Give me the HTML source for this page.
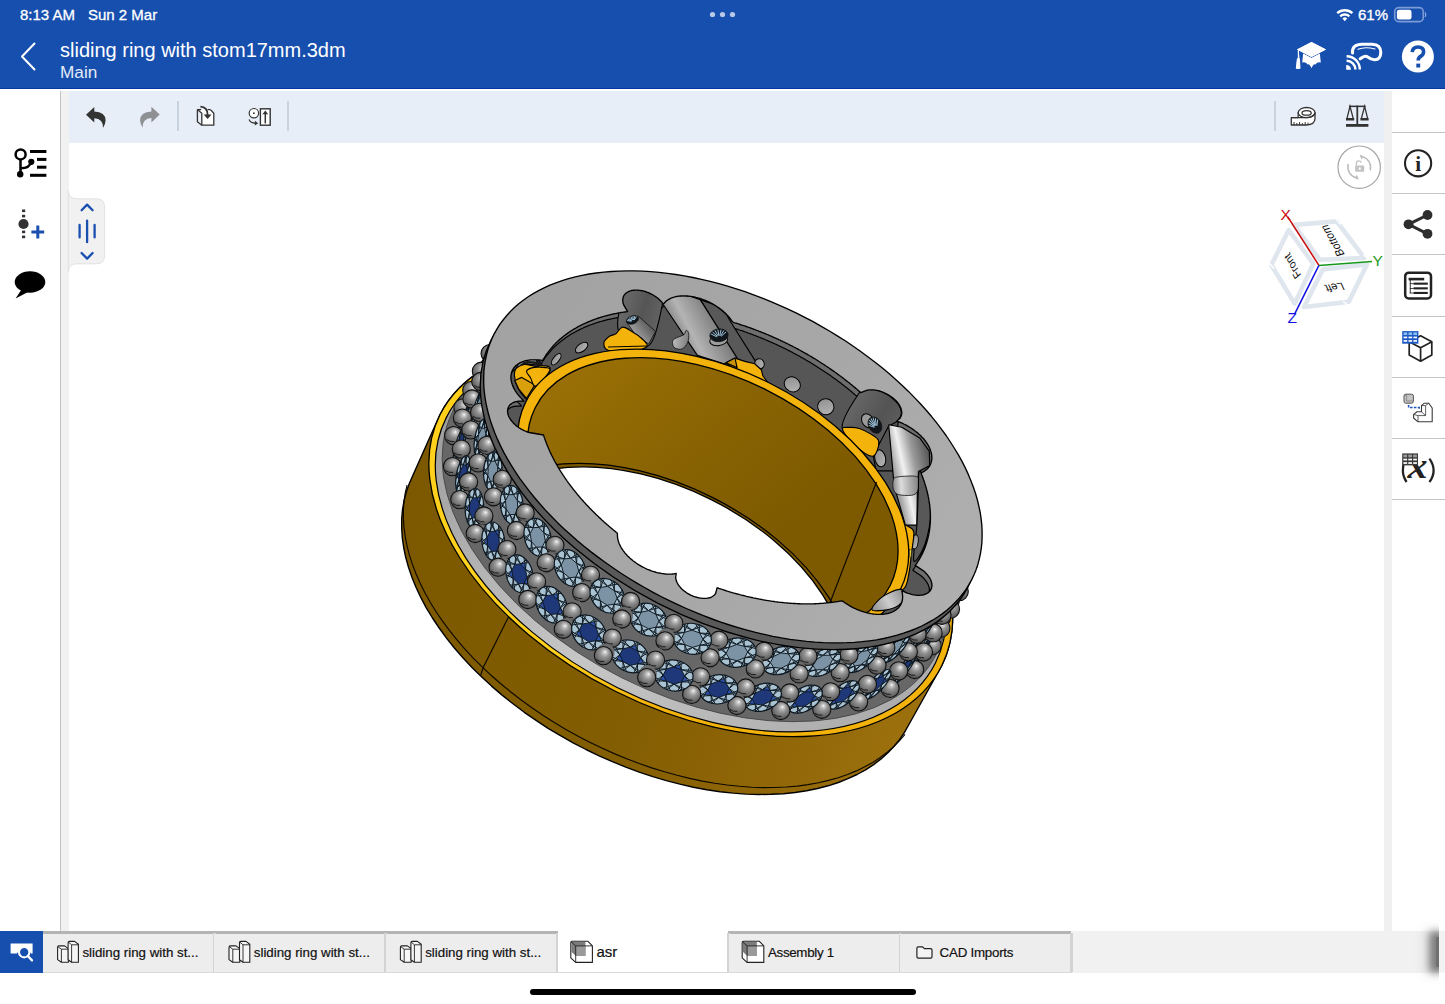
<!DOCTYPE html>
<html lang="en">
<head>
<meta charset="utf-8">
<title>sliding ring with stom17mm.3dm</title>
<style>
*{box-sizing:border-box;margin:0;padding:0}
html,body{width:1445px;height:1004px;overflow:hidden;background:#fff}
body{position:relative;font-family:"Liberation Sans",sans-serif;color:#1a1a1a}
.abs{position:absolute}
#hdr{left:0;top:0;width:1445px;height:89.3px;background:#174fae;color:#fff;border-bottom:1.6px solid #0736a2}
#hdr .st{position:absolute;top:6px;font-size:15px;line-height:17px;-webkit-text-stroke:.3px #fff;white-space:nowrap}
#title{position:absolute;left:60px;top:39px;font-size:20px;line-height:22px;white-space:nowrap}
#sub{position:absolute;left:60px;top:63px;font-size:17.2px;line-height:19px;color:#e4ebf7;white-space:nowrap}
#tb{left:68.5px;top:91px;width:1315.5px;height:51.8px;background:#e8eef8}
#lstrip{left:60px;top:91px;width:8.5px;height:840px;background:#f1f1f1;border-left:1.2px solid #c4c4c4}
#rstrip{left:1384px;top:91px;width:8px;height:840px;background:#f0f0f0}
.sep{position:absolute;width:2px;background:#c9d3e0;top:101px;height:30px}
.rline{position:absolute;left:1392px;width:53px;height:1px;background:#c4c4c4}
#tabs{left:0;top:930.6px;width:1445px;height:42.4px;background:#f1f1f1}
.tl{white-space:nowrap;color:#111;line-height:18px;-webkit-text-stroke:.2px #111}
#home{left:530px;top:988.6px;width:385.6px;height:6px;border-radius:3px;background:#000}
svg{position:absolute;overflow:visible}
</style>
</head>
<body>
<!-- header -->
<div id="hdr" class="abs">
  <div class="st" style="left:20px">8:13 AM</div>
  <div class="st" style="left:88px">Sun 2 Mar</div>
  <div class="st" style="left:1358px">61%</div>
  <div id="title">sliding ring with stom17mm.3dm</div>
  <div id="sub">Main</div>
</div>
<svg class="abs" style="left:0;top:0" width="1445" height="90" viewBox="0 0 1445 90">
  <!-- back chevron -->
  <path d="M34.5 43.5 L22 56.5 L34.5 69.5" fill="none" stroke="#fff" stroke-width="2" stroke-linecap="round" stroke-linejoin="round"/>
  <!-- three dots -->
  <circle cx="712.5" cy="14.5" r="2.6" fill="#b9c9e6"/><circle cx="722.5" cy="14.5" r="2.6" fill="#b9c9e6"/><circle cx="732.5" cy="14.5" r="2.6" fill="#b9c9e6"/>
  <!-- wifi -->
  <g fill="none" stroke="#fff" stroke-linecap="butt">
    <path d="M1337.2 13.2 A11.2 11.2 0 0 1 1352.4 13.2" stroke-width="2.3"/>
    <path d="M1340.2 16.3 A6.8 6.8 0 0 1 1349.4 16.3" stroke-width="2.3"/>
  </g>
  <path d="M1342.4 18.5 A3.4 3.4 0 0 1 1347.2 18.5 L1344.8 21.2 Z" fill="#fff"/>
  <!-- battery -->
  <rect x="1394.7" y="7.6" width="28.6" height="14" rx="4.2" fill="none" stroke="#7d9bd6" stroke-width="1.6"/>
  <rect x="1396.9" y="9.8" width="14.6" height="9.6" rx="2.2" fill="#fff"/>
  <path d="M1425 12.2 Q1427 14.6 1425 17" fill="#8fa9d8" stroke="#8fa9d8" stroke-width="1"/>
  <!-- graduation cap -->
  <g fill="#fff">
    <path d="M1303.2 53 L1311.5 57.6 L1319.8 53 L1320.8 62.4 Q1317.4 61.4 1315.4 64.4 Q1313.4 63.6 1311.5 68.2 Q1309.6 63.6 1307.6 64.4 Q1305.6 61.4 1302.2 62.4 Z"/>
    <path d="M1311.5 42.1 L1326 49.4 L1311.5 56.9 L1297 49.4 Z" stroke="#174fae" stroke-width="1.5" paint-order="stroke"/>
    <path d="M1311.5 42.1 L1326 49.4 L1311.5 56.9 L1297 49.4 Z"/>
    <path d="M1298.3 50.4 L1298.3 57.5 Q1297.3 58.3 1297.2 60 L1296.3 68.4 L1300 68.4 L1299.5 60 Q1299.5 58.3 1298.9 57.5 Z" stroke="#fff" stroke-width="1" stroke-linejoin="round"/>
  </g>
  <!-- headset / cast -->
  <g fill="none" stroke="#fff">
    <path d="M1352.5 53 Q1352 44.2 1362 44.2 L1372 44.2 Q1381 44.6 1380.8 52.5 Q1380.6 60 1374.5 59.7 Q1370.5 59.5 1368 57.2 Q1365.4 55.2 1362 57.6 L1360.2 58.8" stroke-width="3.1" stroke-linecap="round" stroke-linejoin="round"/>
    <path d="M1358 49.3 Q1365 46.3 1375 49" stroke-width="1.1" stroke-linecap="round"/>
    <path d="M1346.6 56.3 A13.2 13.2 0 0 1 1359.8 69.6" stroke-width="2.4"/>
    <path d="M1346.6 60.8 A8.8 8.8 0 0 1 1355.4 69.6" stroke-width="2.4"/>
  </g>
  <path d="M1346.2 65 A4.6 4.6 0 0 1 1351 69.7 L1346.2 69.7 Z" fill="#fff"/>
  <!-- help -->
  <circle cx="1417.9" cy="56.5" r="16" fill="#fff"/>
  <path d="M1412.2 52.2 Q1412.6 47 1418 47 Q1423.6 47 1423.6 51.8 Q1423.6 54.6 1420.6 56.4 Q1418.2 57.8 1418.2 60.6" fill="none" stroke="#174fae" stroke-width="3.6"/>
  <rect x="1416.3" y="63.6" width="3.9" height="3.9" fill="#174fae"/>
</svg>

<div id="lstrip" class="abs"></div>
<div id="rstrip" class="abs"></div>
<div id="tb" class="abs"></div>
<div class="sep" style="left:176.5px"></div>
<div class="sep" style="left:286.7px"></div>
<div class="sep" style="left:1273.7px"></div>
<svg class="abs" style="left:0;top:90px" width="1445" height="54" viewBox="0 90 1445 54">
  <!-- undo -->
  <path d="M86 114.7 L94.3 106.9 L94.3 111.6 Q105.6 112 105.6 120.6 Q105.4 124.6 103 127.9 Q103.4 118.7 94.3 118.2 L94.3 122.6 Z" fill="#333"/>
  <!-- redo -->
  <path d="M159.7 114.5 L151.4 106.7 L151.4 111.4 Q140.1 111.8 140.1 120.4 Q140.3 124.4 142.7 127.7 Q142.3 118.5 151.4 118 L151.4 122.4 Z" fill="#8e9094"/>
  <!-- insert part -->
  <g fill="none" stroke="#333" stroke-width="1.3" stroke-linejoin="round">
    <path d="M197.4 109.6 L201.8 113.2 L201.8 125.2 L213.8 125.2 L213.8 113.2 L210.4 109.6" fill="#fff"/>
    <path d="M197.4 109.6 L197.4 121.8 L201.8 125.2"/>
    <path d="M197.4 109.6 L201.2 109.6"/>
    <path d="M207.5 109.6 L210.4 109.6"/>
  </g>
  <path d="M200.4 106.6 Q207.6 106.8 207.6 115" fill="none" stroke="#333" stroke-width="1.9"/>
  <path d="M203.6 114.4 L211.6 114.4 L207.6 119 Z" fill="#333"/>
  <!-- mate / replicate -->
  <circle cx="253.9" cy="113.2" r="4.7" fill="#fff" stroke="#333" stroke-width="1.2"/>
  <circle cx="253.9" cy="113.2" r=".9" fill="#333"/>
  <rect x="260.4" y="108.8" width="9.8" height="16.4" fill="#fff" stroke="#333" stroke-width="1.4"/>
  <path d="M265.3 123.4 L265.3 113" stroke="#333" stroke-width="1.5" fill="none"/>
  <path d="M262.4 114.2 L265.3 110.6 L268.2 114.2 Z" fill="#333"/>
  <path d="M249 119.6 Q250.6 123.2 255.2 123.2" fill="none" stroke="#333" stroke-width="1.2"/>
  <path d="M254.8 120.8 L258.2 123.2 L254.8 125.6 Z" fill="#333"/>
  <!-- tape measure -->
  <g fill="#fff" stroke="#333" stroke-width="1.3" stroke-linejoin="round">
    <path d="M1291.3 117.6 L1291.3 125 L1306.5 125 Q1315 124.4 1315 118.4 L1315 112.6 L1298.2 112.6 L1298.2 117.6 Z"/>
    <ellipse cx="1306.6" cy="112.6" rx="8.4" ry="5.1"/>
    <ellipse cx="1306.6" cy="112.9" rx="4.6" ry="2.3"/>
    <path d="M1291.3 117.6 L1304 117.6 Q1312 118.2 1315 113.4" fill="none"/>
  </g>
  <path d="M1294 125 v-3 M1296.8 125 v-2 M1299.6 125 v-3 M1302.4 125 v-2 M1305.2 125 v-3 M1308 124.6 v-2" stroke="#333" stroke-width="1" fill="none"/>
  <!-- scale / mass -->
  <g fill="#333" stroke="none">
    <rect x="1349" y="105.6" width="16.6" height="1.5"/>
    <rect x="1356.4" y="105.6" width="1.8" height="19"/>
    <rect x="1346" y="124" width="22.4" height="2.8"/>
    <rect x="1346" y="118" width="8.2" height="2.5"/>
    <rect x="1360.4" y="118" width="8.2" height="2.5"/>
  </g>
  <path d="M1347 118.4 L1350 106.4 L1353.2 118.4 M1361.4 118.4 L1364.6 106.4 L1367.6 118.4" fill="none" stroke="#333" stroke-width="1.3"/>
</svg>

<svg class="abs" style="left:0;top:143px" width="120" height="170" viewBox="0 143 120 170">
  <!-- feature tree -->
  <g fill="#000">
    <rect x="30" y="150" width="16.4" height="3"/>
    <rect x="37" y="157.9" width="9.4" height="3"/>
    <rect x="37" y="165.7" width="9.4" height="3"/>
    <rect x="30" y="173.8" width="16.4" height="3"/>
    <circle cx="20.2" cy="174.2" r="3.2"/>
    <circle cx="31.3" cy="161.8" r="3.1"/>
  </g>
  <circle cx="20.6" cy="154.4" r="5" fill="#fff" stroke="#000" stroke-width="2.5"/>
  <path d="M20.5 159.6 L20.5 174 M20.5 168.2 Q29.6 168.4 31 162" fill="none" stroke="#000" stroke-width="2.5"/>
  <!-- add feature -->
  <g fill="#333">
    <rect x="22" y="209.5" width="3.2" height="2.6"/><rect x="22" y="214.8" width="3.2" height="2.6"/>
    <rect x="22" y="230.6" width="3.2" height="2.6"/><rect x="22" y="235.6" width="3.2" height="2.6"/>
    <circle cx="23.5" cy="224" r="5.1"/>
  </g>
  <path d="M31.4 232 H44.2 M37.8 225.6 V238.4" stroke="#1a4fb0" stroke-width="3" fill="none"/>
  <!-- comment -->
  <ellipse cx="30" cy="282" rx="15.3" ry="10.7" fill="#000"/>
  <path d="M22.5 288 L15.6 298.6 L29 291.5 Z" fill="#000"/>
  <!-- handle tab -->
  <path d="M68.3 190.6 Q68.6 198.8 76.8 198.8 L96.4 198.8 Q104.6 198.8 104.6 207 L104.6 255.6 Q104.6 263.8 96.4 263.8 L76.8 263.8 Q68.6 263.8 68.3 272.2 Z" fill="#f1f1f1" stroke="#e2e2e2" stroke-width="1"/>
  <g fill="none" stroke="#1a4fb0" stroke-width="2.3" stroke-linecap="round" stroke-linejoin="round">
    <path d="M81.6 210.2 L87.1 204.6 L92.6 210.2"/>
    <path d="M81.6 253 L87.1 258.6 L92.6 253"/>
    <path d="M87.1 220.6 V242.2 M79.6 225 V237.4 M94.6 225 V237.4"/>
  </g>
</svg>

<div class="rline" style="top:132px"></div>
<div class="rline" style="top:193px"></div>
<div class="rline" style="top:254px"></div>
<div class="rline" style="top:316px"></div>
<div class="rline" style="top:377px"></div>
<div class="rline" style="top:438px"></div>
<div class="rline" style="top:499px"></div>
<svg class="abs" style="left:1330px;top:140px" width="115" height="360" viewBox="1330 140 115 360">
  <!-- rotate lock button -->
  <circle cx="1359.2" cy="167.2" r="21.2" fill="#fff" stroke="#a6a6a6" stroke-width="1.2"/>
  <g fill="none" stroke="#bdbdbd" stroke-width="1.5">
    <path d="M1362.6 156.6 A11.4 11.4 0 0 1 1370.2 170.4"/>
    <path d="M1355.8 177.8 A11.4 11.4 0 0 1 1348.2 164"/>
  </g>
  <path d="M1359.6 154.6 L1363.6 156.2 L1361.4 159.6 Z" fill="#bdbdbd"/>
  <path d="M1358.8 179.8 L1354.8 178.2 L1357 174.8 Z" fill="#bdbdbd"/>
  <rect x="1355.2" y="165.4" width="9" height="6.4" rx=".8" fill="#c2c2c2"/>
  <path d="M1356.4 165.4 V163.4 Q1356.4 160.8 1358.8 160.8 Q1361 160.8 1361.2 162.6" fill="none" stroke="#c2c2c2" stroke-width="1.3"/>
  <rect x="1358.7" y="167.4" width="2" height="2.4" fill="#fff"/>
  <!-- info -->
  <circle cx="1418.1" cy="163.3" r="13.1" fill="none" stroke="#222" stroke-width="2.1"/>
  <text x="1418.1" y="170.6" font-family="'Liberation Serif',serif" font-weight="bold" font-size="21" text-anchor="middle" fill="#222">i</text>
  <!-- share -->
  <path d="M1427.5 215 L1408.5 224.3 L1427.5 233.8" fill="none" stroke="#2e2e2e" stroke-width="3"/>
  <circle cx="1427.5" cy="215" r="4.9" fill="#2e2e2e"/><circle cx="1408.5" cy="224.3" r="4.9" fill="#2e2e2e"/><circle cx="1427.5" cy="233.8" r="4.9" fill="#2e2e2e"/>
  <!-- BOM -->
  <rect x="1405.2" y="272.7" width="25.8" height="25.8" rx="3.6" fill="none" stroke="#222" stroke-width="2.5"/>
  <g fill="#222">
    <rect x="1408.6" y="277.8" width="15.6" height="2.6"/>
    <rect x="1413.6" y="282.6" width="14.2" height="2.1"/>
    <rect x="1413.6" y="287.3" width="14.2" height="2.1"/>
    <rect x="1413.6" y="291.9" width="14.2" height="2.1"/>
    <rect x="1409.8" y="279" width=".9" height="14.4"/>
    <rect x="1409.8" y="283.3" width="4" height=".8"/><rect x="1409.8" y="288" width="4" height=".8"/><rect x="1409.8" y="292.6" width="4" height=".8"/>
  </g>
  <!-- grid + cube -->
  <g fill="none" stroke="#222" stroke-width="1.7" stroke-linejoin="round">
    <path d="M1420.6 335.8 L1431.8 341.8 L1431.8 355 L1420.6 361.2 L1409.2 355 L1409.2 341.8 Z" fill="#fff"/>
    <path d="M1409.2 341.8 L1420.6 347.8 L1431.8 341.8 M1420.6 347.8 V361.2"/>
  </g>
  <rect x="1402.2" y="331.1" width="16.2" height="12.6" fill="#1d57c2"/>
  <g fill="#8cc2f2"><rect x="1403.6" y="332.4" width="3.6" height="2.6"/><rect x="1408.5" y="332.4" width="3.6" height="2.6"/><rect x="1413.4" y="332.4" width="3.6" height="2.6"/></g>
  <g fill="#fff"><rect x="1403.6" y="336.6" width="3.6" height="1.7"/><rect x="1408.5" y="336.6" width="3.6" height="1.7"/><rect x="1413.4" y="336.6" width="3.6" height="1.7"/>
  <rect x="1403.6" y="340.1" width="3.6" height="1.7"/><rect x="1408.5" y="340.1" width="3.6" height="1.7"/><rect x="1413.4" y="340.1" width="3.6" height="1.7"/></g>
  <!-- mate connector -->
  <rect x="1404" y="394.2" width="9.4" height="9" rx="1.8" fill="#c4c4c4" stroke="#555" stroke-width="1"/>
  <path d="M1404.4 396.4 L1406.6 394.4 M1406.6 394.4 V401 H1413" fill="none" stroke="#777" stroke-width=".7"/>
  <path d="M1408.6 405 V407.6 H1419.2 V409.6" fill="none" stroke="#1d57c2" stroke-width="1.5" stroke-dasharray="2.6 1.3"/>
  <g fill="#fff" stroke="#3a3a3a" stroke-width="1.1" stroke-linejoin="round">
    <path d="M1421.5 405.6 L1424.3 403.2 L1428.8 403.2 L1432.2 408 L1432.2 421.8 L1418 421.8 L1413.6 418 L1413.6 414.4 L1417 411.8 L1421.5 411.8 Z"/>
    <path d="M1421.5 405.6 L1425.6 405.6 L1425.6 415.6 L1418 415.6 L1418 421.8 M1425.6 405.6 L1428.8 403.2 M1413.6 414.4 L1418 415.6 M1425.6 415.6 L1421.5 411.8" fill="none" stroke-width=".8"/>
  </g>
  <!-- variable table -->
  <path d="M1406.6 482 Q1402.6 476 1402.9 470 Q1403 466 1404 462" fill="none" stroke="#222" stroke-width="2.3"/>
  <path d="M1429.4 458.6 Q1433.6 464.4 1433.6 470.4 Q1433.6 476.4 1429.4 482" fill="none" stroke="#222" stroke-width="2.3"/>
  <text x="1407.4" y="477.6" font-family="'Liberation Serif',serif" font-style="italic" font-weight="bold" font-size="35" fill="#222" textLength="20" lengthAdjust="spacingAndGlyphs">x</text>
  <rect x="1402.2" y="453.4" width="15.8" height="12" fill="#3a3a3a"/>
  <g fill="#9a9a9a"><rect x="1403.4" y="454.6" width="3.7" height="2.7"/><rect x="1408.3" y="454.6" width="3.7" height="2.7"/><rect x="1413.2" y="454.6" width="3.7" height="2.7"/></g>
  <g fill="#fff"><rect x="1403.4" y="458.7" width="3.7" height="1.7"/><rect x="1408.3" y="458.7" width="3.7" height="1.7"/><rect x="1413.2" y="458.7" width="3.7" height="1.7"/>
  <rect x="1403.4" y="462.2" width="3.7" height="1.7"/><rect x="1408.3" y="462.2" width="3.7" height="1.7"/><rect x="1413.2" y="462.2" width="3.7" height="1.7"/></g>
</svg>

<svg class="abs" style="left:0;top:0" width="1445" height="1004" viewBox="0 0 1445 1004">
<defs>
<linearGradient id="gband" gradientUnits="userSpaceOnUse" x1="400" y1="520" x2="960" y2="700"><stop offset="0" stop-color="#7c5800"/><stop offset=".45" stop-color="#825d01"/><stop offset=".8" stop-color="#94690a"/><stop offset="1" stop-color="#a0750e"/></linearGradient>
<linearGradient id="ginner" gradientUnits="userSpaceOnUse" x1="540" y1="400" x2="900" y2="560"><stop offset="0" stop-color="#9a7006"/><stop offset=".35" stop-color="#8a6403"/><stop offset=".7" stop-color="#7d5900"/><stop offset="1" stop-color="#7d5900"/></linearGradient>
<linearGradient id="gplate" gradientUnits="userSpaceOnUse" x1="480" y1="300" x2="980" y2="620"><stop offset="0" stop-color="#a2a2a2"/><stop offset=".6" stop-color="#a8a8a8"/><stop offset="1" stop-color="#b0b0b0"/></linearGradient>
<linearGradient id="gbevel" gradientUnits="userSpaceOnUse" x1="430" y1="480" x2="950" y2="700"><stop offset="0" stop-color="#9d9d9d"/><stop offset=".5" stop-color="#c6c6c6"/><stop offset="1" stop-color="#a8a8a8"/></linearGradient>
<radialGradient id="gbead" cx=".52" cy=".4" r=".62" fx=".6" fy=".3"><stop offset="0" stop-color="#ffffff"/><stop offset=".12" stop-color="#cdcdcd"/><stop offset=".4" stop-color="#939393"/><stop offset=".75" stop-color="#6c6c6c"/><stop offset="1" stop-color="#4c4c4c"/></radialGradient>
<linearGradient id="gcolL" x1="0" y1="0" x2="1" y2="0"><stop offset="0" stop-color="#c9c9c9"/><stop offset=".5" stop-color="#9a9a9a"/><stop offset="1" stop-color="#5e5e5e"/></linearGradient>
<linearGradient id="gcolR" x1="0" y1="0" x2="1" y2="0"><stop offset="0" stop-color="#8d8d8d"/><stop offset=".3" stop-color="#efefef"/><stop offset=".7" stop-color="#8a8a8a"/><stop offset="1" stop-color="#5a5a5a"/></linearGradient>
<linearGradient id="ghole" x1="0" y1="0" x2="1" y2="1"><stop offset="0" stop-color="#8b8b8b"/><stop offset="1" stop-color="#b9b9b9"/></linearGradient>
<linearGradient id="gcylA" gradientUnits="userSpaceOnUse" x1="620" y1="310" x2="664" y2="322"><stop offset="0" stop-color="#6a6a6a"/><stop offset=".5" stop-color="#555"/><stop offset="1" stop-color="#666"/></linearGradient>
<linearGradient id="gtubeA" gradientUnits="userSpaceOnUse" x1="630" y1="340" x2="652" y2="322"><stop offset="0" stop-color="#bdbdbd"/><stop offset="1" stop-color="#4c4c4c"/></linearGradient>
<linearGradient id="gcolB" gradientUnits="userSpaceOnUse" x1="672" y1="338" x2="722" y2="312"><stop offset="0" stop-color="#6e6e6e"/><stop offset=".35" stop-color="#b4b4b4"/><stop offset="1" stop-color="#6a6a6a"/></linearGradient>
<linearGradient id="gblob" gradientUnits="userSpaceOnUse" x1="673" y1="340" x2="690" y2="342"><stop offset="0" stop-color="#b8b8b8"/><stop offset="1" stop-color="#7a7a7a"/></linearGradient>
<linearGradient id="gcylC" gradientUnits="userSpaceOnUse" x1="850" y1="400" x2="900" y2="430"><stop offset="0" stop-color="#686868"/><stop offset=".6" stop-color="#545454"/><stop offset="1" stop-color="#5e5e5e"/></linearGradient>
<linearGradient id="gcolD" gradientUnits="userSpaceOnUse" x1="893" y1="470" x2="930" y2="462"><stop offset="0" stop-color="#9b9b9b"/><stop offset=".28" stop-color="#f2f2f2"/><stop offset=".6" stop-color="#9a9a9a"/><stop offset="1" stop-color="#5a5a5a"/></linearGradient>
<linearGradient id="gcollar" gradientUnits="userSpaceOnUse" x1="893" y1="486" x2="920" y2="484"><stop offset="0" stop-color="#8a8a8a"/><stop offset=".3" stop-color="#dcdcdc"/><stop offset="1" stop-color="#7b7b7b"/></linearGradient>
<linearGradient id="gcolF" gradientUnits="userSpaceOnUse" x1="872" y1="612" x2="905" y2="592"><stop offset="0" stop-color="#8c8c8c"/><stop offset=".5" stop-color="#cdcdcd"/><stop offset="1" stop-color="#8e8e8e"/></linearGradient>
<g id="stoneA"><circle r="1" fill="#a9c3d3"/><path d="M1.000 0.000 L0.517 0.214 L0.707 0.707 M0.780 0.000 L0.980 0.199 M0.780 0.000 L0.980 -0.199 M0.517 0.214 L0.780 0.000 M0.517 -0.214 L0.780 0.000 M0.707 0.707 L0.214 0.517 L0.000 1.000 M0.552 0.552 L0.552 0.834 M0.552 0.552 L0.834 0.552 M0.214 0.517 L0.552 0.552 M0.517 0.214 L0.552 0.552 M0.000 1.000 L-0.214 0.517 L-0.707 0.707 M0.000 0.780 L-0.199 0.980 M0.000 0.780 L0.199 0.980 M-0.214 0.517 L0.000 0.780 M0.214 0.517 L0.000 0.780 M-0.707 0.707 L-0.517 0.214 L-1.000 0.000 M-0.552 0.552 L-0.834 0.552 M-0.552 0.552 L-0.552 0.834 M-0.517 0.214 L-0.552 0.552 M-0.214 0.517 L-0.552 0.552 M-1.000 0.000 L-0.517 -0.214 L-0.707 -0.707 M-0.780 0.000 L-0.980 -0.199 M-0.780 0.000 L-0.980 0.199 M-0.517 -0.214 L-0.780 0.000 M-0.517 0.214 L-0.780 0.000 M-0.707 -0.707 L-0.214 -0.517 L-0.000 -1.000 M-0.552 -0.552 L-0.552 -0.834 M-0.552 -0.552 L-0.834 -0.552 M-0.214 -0.517 L-0.552 -0.552 M-0.517 -0.214 L-0.552 -0.552 M-0.000 -1.000 L0.214 -0.517 L0.707 -0.707 M-0.000 -0.780 L0.199 -0.980 M-0.000 -0.780 L-0.199 -0.980 M0.214 -0.517 L-0.000 -0.780 M-0.214 -0.517 L-0.000 -0.780 M0.707 -0.707 L0.517 -0.214 L1.000 -0.000 M0.552 -0.552 L0.834 -0.552 M0.552 -0.552 L0.552 -0.834 M0.517 -0.214 L0.552 -0.552 M0.214 -0.517 L0.552 -0.552" fill="none" stroke="#0d1720" stroke-width=".95" vector-effect="non-scaling-stroke"/><path d="M0.517 0.214 L0.214 0.517 L-0.214 0.517 L-0.517 0.214 L-0.517 -0.214 L-0.214 -0.517 L0.214 -0.517 L0.517 -0.214 Z" fill="#7b93a5" stroke="#0d1720" stroke-width=".95" vector-effect="non-scaling-stroke"/><circle r="1" fill="none" stroke="#0d1720" stroke-width="1.2" vector-effect="non-scaling-stroke"/></g>
<g id="stoneB"><circle r="1" fill="#a9c3d3"/><path d="M0.517 0.214 L0.552 0.552 L0.214 0.517 L0.214 0.210 Z M-0.517 0.214 L-0.780 0.000 L-0.517 -0.214 L-0.300 0.003 Z M-0.214 -0.517 L-0.000 -0.780 L0.214 -0.517 L-0.003 -0.300 Z" fill="#2d52b0"/><path d="M1.000 0.000 L0.517 0.214 L0.707 0.707 M0.780 0.000 L0.980 0.199 M0.780 0.000 L0.980 -0.199 M0.517 0.214 L0.780 0.000 M0.517 -0.214 L0.780 0.000 M0.707 0.707 L0.214 0.517 L0.000 1.000 M0.552 0.552 L0.552 0.834 M0.552 0.552 L0.834 0.552 M0.214 0.517 L0.552 0.552 M0.517 0.214 L0.552 0.552 M0.000 1.000 L-0.214 0.517 L-0.707 0.707 M0.000 0.780 L-0.199 0.980 M0.000 0.780 L0.199 0.980 M-0.214 0.517 L0.000 0.780 M0.214 0.517 L0.000 0.780 M-0.707 0.707 L-0.517 0.214 L-1.000 0.000 M-0.552 0.552 L-0.834 0.552 M-0.552 0.552 L-0.552 0.834 M-0.517 0.214 L-0.552 0.552 M-0.214 0.517 L-0.552 0.552 M-1.000 0.000 L-0.517 -0.214 L-0.707 -0.707 M-0.780 0.000 L-0.980 -0.199 M-0.780 0.000 L-0.980 0.199 M-0.517 -0.214 L-0.780 0.000 M-0.517 0.214 L-0.780 0.000 M-0.707 -0.707 L-0.214 -0.517 L-0.000 -1.000 M-0.552 -0.552 L-0.552 -0.834 M-0.552 -0.552 L-0.834 -0.552 M-0.214 -0.517 L-0.552 -0.552 M-0.517 -0.214 L-0.552 -0.552 M-0.000 -1.000 L0.214 -0.517 L0.707 -0.707 M-0.000 -0.780 L0.199 -0.980 M-0.000 -0.780 L-0.199 -0.980 M0.214 -0.517 L-0.000 -0.780 M-0.214 -0.517 L-0.000 -0.780 M0.707 -0.707 L0.517 -0.214 L1.000 -0.000 M0.552 -0.552 L0.834 -0.552 M0.552 -0.552 L0.552 -0.834 M0.517 -0.214 L0.552 -0.552 M0.214 -0.517 L0.552 -0.552" fill="none" stroke="#0d1720" stroke-width=".95" vector-effect="non-scaling-stroke"/><path d="M0.517 0.214 L0.214 0.517 L-0.214 0.517 L-0.517 0.214 L-0.517 -0.214 L-0.214 -0.517 L0.214 -0.517 L0.517 -0.214 Z" fill="#1f3879" stroke="#0d1720" stroke-width=".95" vector-effect="non-scaling-stroke"/><circle r="1" fill="none" stroke="#0d1720" stroke-width="1.2" vector-effect="non-scaling-stroke"/></g>
</defs>
<path d="M439.9 414.8 L439.9 414.8 L444.2 407.0 L449.2 399.7 L454.8 392.7 L461.1 386.2 L468.0 380.0 L475.6 374.3 L483.7 369.0 L492.4 364.3 L501.6 360.0 L511.3 356.2 L521.6 352.9 L532.2 350.1 L543.4 347.8 L554.9 346.1 L566.8 344.9 L579.1 344.2 L591.6 344.1 L604.4 344.5 L617.5 345.4 L630.8 346.9 L644.2 348.9 L657.8 351.5 L671.4 354.5 L685.1 358.1 L698.8 362.1 L712.5 366.7 L726.1 371.7 L739.7 377.2 L753.1 383.1 L766.3 389.5 L779.3 396.3 L792.1 403.5 L804.6 411.0 L816.8 418.9 L828.6 427.2 L840.1 435.7 L851.2 444.5 L861.8 453.6 L871.9 463.0 L881.6 472.5 L890.7 482.2 L899.3 492.1 L907.3 502.2 L914.7 512.3 L921.5 522.5 L927.7 532.8 L933.2 543.0 L938.1 553.3 L942.2 563.5 L945.7 573.7 L948.5 583.8 L950.6 593.7 L952.0 603.6 L952.6 613.2 L952.6 622.6 L951.8 631.9 L950.3 640.8 L948.1 649.5 L945.2 657.9 L941.6 666.0 L908.9 724.5 L904.6 732.2 L899.7 739.4 L894.1 746.3 L887.9 752.8 L881.1 758.9 L873.6 764.6 L865.6 769.8 L857.0 774.5 L847.9 778.7 L838.3 782.5 L828.1 785.8 L817.6 788.5 L806.6 790.8 L795.1 792.5 L783.4 793.7 L771.2 794.3 L758.8 794.5 L746.1 794.1 L733.2 793.1 L720.1 791.7 L706.8 789.7 L693.4 787.2 L679.9 784.1 L666.3 780.6 L652.8 776.6 L639.2 772.1 L625.8 767.1 L612.4 761.7 L599.1 755.8 L586.0 749.5 L573.1 742.8 L560.5 735.7 L548.1 728.3 L536.1 720.4 L524.3 712.3 L513.0 703.8 L502.1 695.1 L491.6 686.1 L481.5 676.8 L472.0 667.4 L462.9 657.8 L454.4 648.0 L446.5 638.1 L439.2 628.0 L432.5 618.0 L426.3 607.8 L420.9 597.6 L416.1 587.5 L412.0 577.4 L408.5 567.3 L405.7 557.3 L403.7 547.5 L402.3 537.8 L401.7 528.2 L401.7 518.9 L402.5 509.8 L404.0 500.9 L406.2 492.3 L409.1 484.0 L412.6 476.0 Z" fill="url(#gband)" stroke="#000" stroke-width="1.4" stroke-linejoin="round"/>
<path d="M905.0 734.4 L899.6 740.7 L893.7 746.7 L887.2 752.3 L880.2 757.5 L872.8 762.4 L864.8 766.8 L856.4 770.9 L847.5 774.5 L838.2 777.7 L828.5 780.4 L818.5 782.8 L808.0 784.6 L797.3 786.1 L786.2 787.0 L774.8 787.5 L763.2 787.6 L751.4 787.2 L739.4 786.3 L727.1 785.0 L714.8 783.3 L702.3 781.1 L689.7 778.4 L677.1 775.3 L664.5 771.8 L651.8 767.9 L639.2 763.5 L626.7 758.7 L614.2 753.6 L601.9 748.1 L589.7 742.2 L577.7 736.0 L565.9 729.4 L554.3 722.5 L542.9 715.3 L531.9 707.8 L521.2 700.0 L510.8 692.0 L500.8 683.8 L491.1 675.3 L481.9 666.6 L473.0 657.8 L464.7 648.8 L456.8 639.7 L449.4 630.4 L442.5 621.1 L436.1 611.7 L430.2 602.3 L424.9 592.8 L420.2 583.3 L416.0 573.8 L412.4 564.4 L409.4 555.1 L407.0 545.8 L405.2 536.6 L404.0 527.6 L403.4 518.7 L403.4 510.0 L404.0 501.5 L405.2 493.2 L407.1 485.1" fill="none" stroke="#0d0900" stroke-width="1.15"/>
<path d="M508.6 616.8 L483.1 667.8 L480.5 675.9" fill="none" stroke="#0d0900" stroke-width="1.15"/>
<linearGradient id="gface" gradientUnits="userSpaceOnUse" x1="690.8" y1="540.4" x2="572.8" y2="667.1"><stop offset="0" stop-color="#f4b30b"/><stop offset=".55" stop-color="#f4b30b"/><stop offset="1" stop-color="#ffd11c"/></linearGradient>
<ellipse cx="690.8" cy="540.4" rx="280.5" ry="168.7" transform="rotate(26.60 690.8 540.4)" fill="url(#gface)" stroke="#000" stroke-width="1.3"/>
<ellipse cx="690.8" cy="540.4" rx="273.6" ry="164.6" transform="rotate(26.60 690.8 540.4)" fill="url(#gbevel)" stroke="#000" stroke-width="1.2"/>
<ellipse cx="694.8" cy="532.3" rx="270.6" ry="162.8" transform="rotate(26.60 694.8 532.3)" fill="#676767" stroke="#444" stroke-width="0.8"/>
<g><path d="M512.5 333.1 L507.5 329.8" stroke="#6a6a6a" stroke-width="18.2" stroke-linecap="round"/><circle cx="507.5" cy="329.8" r="9.1" fill="url(#gbead)" stroke="#111" stroke-width="1.1"/><path d="M500.4 333.7 q3.2 2.7 7.7 2.0" fill="none" stroke="#1a1a1a" stroke-width="1"/>
<path d="M503.7 350.6 L498.7 347.4" stroke="#6a6a6a" stroke-width="18.2" stroke-linecap="round"/><circle cx="498.7" cy="347.4" r="9.1" fill="url(#gbead)" stroke="#111" stroke-width="1.1"/><path d="M491.6 351.2 q3.2 2.7 7.7 2.0" fill="none" stroke="#1a1a1a" stroke-width="1"/>
<path d="M494.1 369.8 L489.2 366.5" stroke="#6a6a6a" stroke-width="18.2" stroke-linecap="round"/><circle cx="489.2" cy="366.5" r="9.1" fill="url(#gbead)" stroke="#111" stroke-width="1.1"/><path d="M482.1 370.3 q3.2 2.7 7.7 2.0" fill="none" stroke="#1a1a1a" stroke-width="1"/>
<path d="M485.3 387.3 L480.4 384.0" stroke="#6a6a6a" stroke-width="18.2" stroke-linecap="round"/><circle cx="480.4" cy="384.0" r="9.1" fill="url(#gbead)" stroke="#111" stroke-width="1.1"/><path d="M473.3 387.9 q3.2 2.7 7.7 2.0" fill="none" stroke="#1a1a1a" stroke-width="1"/>
<path d="M963.1 561.6 L968.6 563.7" stroke="#6a6a6a" stroke-width="18.2" stroke-linecap="round"/><circle cx="968.6" cy="563.7" r="9.1" fill="url(#gbead)" stroke="#111" stroke-width="1.1"/><path d="M961.5 567.5 q3.2 2.7 7.7 2.0" fill="none" stroke="#1a1a1a" stroke-width="1"/>
<path d="M954.3 579.2 L959.9 581.2" stroke="#6a6a6a" stroke-width="18.2" stroke-linecap="round"/><circle cx="959.9" cy="581.2" r="9.1" fill="url(#gbead)" stroke="#111" stroke-width="1.1"/><path d="M952.8 585.1 q3.2 2.7 7.7 2.0" fill="none" stroke="#1a1a1a" stroke-width="1"/>
<path d="M944.7 598.3 L950.3 600.4" stroke="#6a6a6a" stroke-width="18.2" stroke-linecap="round"/><circle cx="950.3" cy="600.4" r="9.1" fill="url(#gbead)" stroke="#111" stroke-width="1.1"/><path d="M943.2 604.2 q3.2 2.7 7.7 2.0" fill="none" stroke="#1a1a1a" stroke-width="1"/>
<path d="M935.9 615.8 L941.5 617.9" stroke="#6a6a6a" stroke-width="18.2" stroke-linecap="round"/><circle cx="941.5" cy="617.9" r="9.1" fill="url(#gbead)" stroke="#111" stroke-width="1.1"/><path d="M934.4 621.7 q3.2 2.7 7.7 2.0" fill="none" stroke="#1a1a1a" stroke-width="1"/>
<use href="#stoneA" transform="matrix(6.87 -9.41 -7.01 13.99 496.9 351.9)"/>
<use href="#stoneB" transform="matrix(6.87 -9.41 -7.01 13.99 478.6 388.6)"/>
<use href="#stoneA" transform="matrix(-3.71 11.01 -7.01 13.99 956.9 585.2)"/>
<use href="#stoneB" transform="matrix(-3.71 11.01 -7.01 13.99 938.6 621.9)"/>
<path d="M495.5 356.3 L490.1 353.6" stroke="#6a6a6a" stroke-width="18.2" stroke-linecap="round"/><circle cx="490.1" cy="353.6" r="9.1" fill="url(#gbead)" stroke="#111" stroke-width="1.1"/><path d="M483.0 357.5 q3.2 2.7 7.7 2.0" fill="none" stroke="#1a1a1a" stroke-width="1"/>
<path d="M486.7 373.9 L481.4 371.2" stroke="#6a6a6a" stroke-width="18.2" stroke-linecap="round"/><circle cx="481.4" cy="371.2" r="9.1" fill="url(#gbead)" stroke="#111" stroke-width="1.1"/><path d="M474.3 375.0 q3.2 2.7 7.7 2.0" fill="none" stroke="#1a1a1a" stroke-width="1"/>
<path d="M477.1 393.0 L471.8 390.3" stroke="#6a6a6a" stroke-width="18.2" stroke-linecap="round"/><circle cx="471.8" cy="390.3" r="9.1" fill="url(#gbead)" stroke="#111" stroke-width="1.1"/><path d="M464.7 394.1 q3.2 2.7 7.7 2.0" fill="none" stroke="#1a1a1a" stroke-width="1"/>
<path d="M468.4 410.5 L463.0 407.8" stroke="#6a6a6a" stroke-width="18.2" stroke-linecap="round"/><circle cx="463.0" cy="407.8" r="9.1" fill="url(#gbead)" stroke="#111" stroke-width="1.1"/><path d="M455.9 411.6 q3.2 2.7 7.7 2.0" fill="none" stroke="#1a1a1a" stroke-width="1"/>
<path d="M953.9 588.8 L959.2 591.6" stroke="#6a6a6a" stroke-width="18.2" stroke-linecap="round"/><circle cx="959.2" cy="591.6" r="9.1" fill="url(#gbead)" stroke="#111" stroke-width="1.1"/><path d="M952.1 595.4 q3.2 2.7 7.7 2.0" fill="none" stroke="#1a1a1a" stroke-width="1"/>
<path d="M945.1 606.4 L950.5 609.1" stroke="#6a6a6a" stroke-width="18.2" stroke-linecap="round"/><circle cx="950.5" cy="609.1" r="9.1" fill="url(#gbead)" stroke="#111" stroke-width="1.1"/><path d="M943.4 612.9 q3.2 2.7 7.7 2.0" fill="none" stroke="#1a1a1a" stroke-width="1"/>
<path d="M935.5 625.5 L940.9 628.2" stroke="#6a6a6a" stroke-width="18.2" stroke-linecap="round"/><circle cx="940.9" cy="628.2" r="9.1" fill="url(#gbead)" stroke="#111" stroke-width="1.1"/><path d="M933.8 632.0 q3.2 2.7 7.7 2.0" fill="none" stroke="#1a1a1a" stroke-width="1"/>
<path d="M926.8 643.0 L932.1 645.7" stroke="#6a6a6a" stroke-width="18.2" stroke-linecap="round"/><circle cx="932.1" cy="645.7" r="9.1" fill="url(#gbead)" stroke="#111" stroke-width="1.1"/><path d="M925.0 649.6 q3.2 2.7 7.7 2.0" fill="none" stroke="#1a1a1a" stroke-width="1"/>
<use href="#stoneA" transform="matrix(3.71 -11.01 -7.01 13.99 483.7 377.5)"/>
<use href="#stoneB" transform="matrix(3.71 -11.01 -7.01 13.99 465.3 414.1)"/>
<use href="#stoneA" transform="matrix(-6.87 9.41 -7.01 13.99 943.7 610.8)"/>
<use href="#stoneB" transform="matrix(-6.87 9.41 -7.01 13.99 925.3 647.4)"/>
<path d="M486.3 383.5 L480.8 381.5" stroke="#6a6a6a" stroke-width="18.2" stroke-linecap="round"/><circle cx="480.8" cy="381.5" r="9.1" fill="url(#gbead)" stroke="#111" stroke-width="1.1"/><path d="M473.7 385.3 q3.2 2.7 7.7 2.0" fill="none" stroke="#1a1a1a" stroke-width="1"/>
<path d="M477.5 401.1 L472.0 399.0" stroke="#6a6a6a" stroke-width="18.2" stroke-linecap="round"/><circle cx="472.0" cy="399.0" r="9.1" fill="url(#gbead)" stroke="#111" stroke-width="1.1"/><path d="M464.9 402.8 q3.2 2.7 7.7 2.0" fill="none" stroke="#1a1a1a" stroke-width="1"/>
<path d="M468.0 420.2 L462.4 418.1" stroke="#6a6a6a" stroke-width="18.2" stroke-linecap="round"/><circle cx="462.4" cy="418.1" r="9.1" fill="url(#gbead)" stroke="#111" stroke-width="1.1"/><path d="M455.3 421.9 q3.2 2.7 7.7 2.0" fill="none" stroke="#1a1a1a" stroke-width="1"/>
<path d="M459.2 437.7 L453.6 435.6" stroke="#6a6a6a" stroke-width="18.2" stroke-linecap="round"/><circle cx="453.6" cy="435.6" r="9.1" fill="url(#gbead)" stroke="#111" stroke-width="1.1"/><path d="M446.5 439.5 q3.2 2.7 7.7 2.0" fill="none" stroke="#1a1a1a" stroke-width="1"/>
<path d="M936.9 612.1 L941.9 615.3" stroke="#6a6a6a" stroke-width="18.2" stroke-linecap="round"/><circle cx="941.9" cy="615.3" r="9.1" fill="url(#gbead)" stroke="#111" stroke-width="1.1"/><path d="M934.8 619.2 q3.2 2.7 7.7 2.0" fill="none" stroke="#1a1a1a" stroke-width="1"/>
<path d="M928.1 629.6 L933.1 632.9" stroke="#6a6a6a" stroke-width="18.2" stroke-linecap="round"/><circle cx="933.1" cy="632.9" r="9.1" fill="url(#gbead)" stroke="#111" stroke-width="1.1"/><path d="M926.0 636.7 q3.2 2.7 7.7 2.0" fill="none" stroke="#1a1a1a" stroke-width="1"/>
<path d="M918.6 648.7 L923.5 652.0" stroke="#6a6a6a" stroke-width="18.2" stroke-linecap="round"/><circle cx="923.5" cy="652.0" r="9.1" fill="url(#gbead)" stroke="#111" stroke-width="1.1"/><path d="M916.4 655.8 q3.2 2.7 7.7 2.0" fill="none" stroke="#1a1a1a" stroke-width="1"/>
<path d="M909.8 666.3 L914.7 669.5" stroke="#6a6a6a" stroke-width="18.2" stroke-linecap="round"/><circle cx="914.7" cy="669.5" r="9.1" fill="url(#gbead)" stroke="#111" stroke-width="1.1"/><path d="M907.6 673.3 q3.2 2.7 7.7 2.0" fill="none" stroke="#1a1a1a" stroke-width="1"/>
<use href="#stoneA" transform="matrix(0.43 -12.24 -7.01 13.99 478.5 406.5)"/>
<use href="#stoneB" transform="matrix(0.43 -12.24 -7.01 13.99 460.2 443.2)"/>
<use href="#stoneA" transform="matrix(-9.80 7.48 -7.01 13.99 922.8 631.9)"/>
<use href="#stoneB" transform="matrix(-9.80 7.48 -7.01 13.99 904.5 668.5)"/>
<path d="M485.3 413.8 L479.7 412.4" stroke="#6a6a6a" stroke-width="18.2" stroke-linecap="round"/><circle cx="479.7" cy="412.4" r="9.1" fill="url(#gbead)" stroke="#111" stroke-width="1.1"/><path d="M472.6 416.2 q3.2 2.7 7.7 2.0" fill="none" stroke="#1a1a1a" stroke-width="1"/>
<path d="M476.5 431.3 L470.9 429.9" stroke="#6a6a6a" stroke-width="18.2" stroke-linecap="round"/><circle cx="470.9" cy="429.9" r="9.1" fill="url(#gbead)" stroke="#111" stroke-width="1.1"/><path d="M463.8 433.7 q3.2 2.7 7.7 2.0" fill="none" stroke="#1a1a1a" stroke-width="1"/>
<path d="M466.9 450.4 L461.3 449.1" stroke="#6a6a6a" stroke-width="18.2" stroke-linecap="round"/><circle cx="461.3" cy="449.1" r="9.1" fill="url(#gbead)" stroke="#111" stroke-width="1.1"/><path d="M454.2 452.9 q3.2 2.7 7.7 2.0" fill="none" stroke="#1a1a1a" stroke-width="1"/>
<path d="M458.1 468.0 L452.5 466.6" stroke="#6a6a6a" stroke-width="18.2" stroke-linecap="round"/><circle cx="452.5" cy="466.6" r="9.1" fill="url(#gbead)" stroke="#111" stroke-width="1.1"/><path d="M445.4 470.4 q3.2 2.7 7.7 2.0" fill="none" stroke="#1a1a1a" stroke-width="1"/>
<path d="M912.7 630.6 L917.1 634.3" stroke="#6a6a6a" stroke-width="18.2" stroke-linecap="round"/><circle cx="917.1" cy="634.3" r="9.1" fill="url(#gbead)" stroke="#111" stroke-width="1.1"/><path d="M910.0 638.1 q3.2 2.7 7.7 2.0" fill="none" stroke="#1a1a1a" stroke-width="1"/>
<path d="M903.9 648.1 L908.3 651.8" stroke="#6a6a6a" stroke-width="18.2" stroke-linecap="round"/><circle cx="908.3" cy="651.8" r="9.1" fill="url(#gbead)" stroke="#111" stroke-width="1.1"/><path d="M901.2 655.6 q3.2 2.7 7.7 2.0" fill="none" stroke="#1a1a1a" stroke-width="1"/>
<path d="M894.3 667.2 L898.7 670.9" stroke="#6a6a6a" stroke-width="18.2" stroke-linecap="round"/><circle cx="898.7" cy="670.9" r="9.1" fill="url(#gbead)" stroke="#111" stroke-width="1.1"/><path d="M891.6 674.7 q3.2 2.7 7.7 2.0" fill="none" stroke="#1a1a1a" stroke-width="1"/>
<path d="M885.6 684.8 L890.0 688.4" stroke="#6a6a6a" stroke-width="18.2" stroke-linecap="round"/><circle cx="890.0" cy="688.4" r="9.1" fill="url(#gbead)" stroke="#111" stroke-width="1.1"/><path d="M882.9 692.3 q3.2 2.7 7.7 2.0" fill="none" stroke="#1a1a1a" stroke-width="1"/>
<use href="#stoneA" transform="matrix(-2.87 -13.05 -7.01 13.99 481.6 438.1)"/>
<use href="#stoneB" transform="matrix(-2.87 -13.05 -7.01 13.99 463.2 474.8)"/>
<use href="#stoneA" transform="matrix(-12.39 5.31 -7.01 13.99 895.1 647.9)"/>
<use href="#stoneB" transform="matrix(-12.39 5.31 -7.01 13.99 876.7 684.5)"/>
<path d="M492.4 446.0 L486.9 445.4" stroke="#6a6a6a" stroke-width="18.2" stroke-linecap="round"/><circle cx="486.9" cy="445.4" r="9.1" fill="url(#gbead)" stroke="#111" stroke-width="1.1"/><path d="M479.8 449.2 q3.2 2.7 7.7 2.0" fill="none" stroke="#1a1a1a" stroke-width="1"/>
<path d="M483.6 463.5 L478.2 462.9" stroke="#6a6a6a" stroke-width="18.2" stroke-linecap="round"/><circle cx="478.2" cy="462.9" r="9.1" fill="url(#gbead)" stroke="#111" stroke-width="1.1"/><path d="M471.1 466.7 q3.2 2.7 7.7 2.0" fill="none" stroke="#1a1a1a" stroke-width="1"/>
<path d="M474.0 482.7 L468.6 482.0" stroke="#6a6a6a" stroke-width="18.2" stroke-linecap="round"/><circle cx="468.6" cy="482.0" r="9.1" fill="url(#gbead)" stroke="#111" stroke-width="1.1"/><path d="M461.5 485.9 q3.2 2.7 7.7 2.0" fill="none" stroke="#1a1a1a" stroke-width="1"/>
<path d="M465.2 500.2 L459.8 499.6" stroke="#6a6a6a" stroke-width="18.2" stroke-linecap="round"/><circle cx="459.8" cy="499.6" r="9.1" fill="url(#gbead)" stroke="#111" stroke-width="1.1"/><path d="M452.7 503.4 q3.2 2.7 7.7 2.0" fill="none" stroke="#1a1a1a" stroke-width="1"/>
<path d="M882.1 643.7 L885.8 647.7" stroke="#6a6a6a" stroke-width="18.2" stroke-linecap="round"/><circle cx="885.8" cy="647.7" r="9.1" fill="url(#gbead)" stroke="#111" stroke-width="1.1"/><path d="M878.7 651.5 q3.2 2.7 7.7 2.0" fill="none" stroke="#1a1a1a" stroke-width="1"/>
<path d="M873.3 661.2 L877.0 665.2" stroke="#6a6a6a" stroke-width="18.2" stroke-linecap="round"/><circle cx="877.0" cy="665.2" r="9.1" fill="url(#gbead)" stroke="#111" stroke-width="1.1"/><path d="M869.9 669.0 q3.2 2.7 7.7 2.0" fill="none" stroke="#1a1a1a" stroke-width="1"/>
<path d="M863.7 680.3 L867.4 684.3" stroke="#6a6a6a" stroke-width="18.2" stroke-linecap="round"/><circle cx="867.4" cy="684.3" r="9.1" fill="url(#gbead)" stroke="#111" stroke-width="1.1"/><path d="M860.3 688.1 q3.2 2.7 7.7 2.0" fill="none" stroke="#1a1a1a" stroke-width="1"/>
<path d="M855.0 697.9 L858.6 701.9" stroke="#6a6a6a" stroke-width="18.2" stroke-linecap="round"/><circle cx="858.6" cy="701.9" r="9.1" fill="url(#gbead)" stroke="#111" stroke-width="1.1"/><path d="M851.5 705.7 q3.2 2.7 7.7 2.0" fill="none" stroke="#1a1a1a" stroke-width="1"/>
<use href="#stoneA" transform="matrix(-6.08 -13.42 -7.01 13.99 492.8 471.2)"/>
<use href="#stoneB" transform="matrix(-6.08 -13.42 -7.01 13.99 474.4 507.9)"/>
<use href="#stoneA" transform="matrix(-14.56 2.95 -7.01 13.99 861.4 658.2)"/>
<use href="#stoneB" transform="matrix(-14.56 2.95 -7.01 13.99 843.1 694.9)"/>
<path d="M507.4 479.1 L502.3 479.3" stroke="#6a6a6a" stroke-width="18.2" stroke-linecap="round"/><circle cx="502.3" cy="479.3" r="9.1" fill="url(#gbead)" stroke="#111" stroke-width="1.1"/><path d="M495.2 483.1 q3.2 2.7 7.7 2.0" fill="none" stroke="#1a1a1a" stroke-width="1"/>
<path d="M498.6 496.7 L493.5 496.8" stroke="#6a6a6a" stroke-width="18.2" stroke-linecap="round"/><circle cx="493.5" cy="496.8" r="9.1" fill="url(#gbead)" stroke="#111" stroke-width="1.1"/><path d="M486.4 500.6 q3.2 2.7 7.7 2.0" fill="none" stroke="#1a1a1a" stroke-width="1"/>
<path d="M489.0 515.8 L483.9 516.0" stroke="#6a6a6a" stroke-width="18.2" stroke-linecap="round"/><circle cx="483.9" cy="516.0" r="9.1" fill="url(#gbead)" stroke="#111" stroke-width="1.1"/><path d="M476.8 519.8 q3.2 2.7 7.7 2.0" fill="none" stroke="#1a1a1a" stroke-width="1"/>
<path d="M480.2 533.3 L475.2 533.5" stroke="#6a6a6a" stroke-width="18.2" stroke-linecap="round"/><circle cx="475.2" cy="533.5" r="9.1" fill="url(#gbead)" stroke="#111" stroke-width="1.1"/><path d="M468.1 537.3 q3.2 2.7 7.7 2.0" fill="none" stroke="#1a1a1a" stroke-width="1"/>
<path d="M846.1 651.0 L849.0 655.1" stroke="#6a6a6a" stroke-width="18.2" stroke-linecap="round"/><circle cx="849.0" cy="655.1" r="9.1" fill="url(#gbead)" stroke="#111" stroke-width="1.1"/><path d="M841.9 658.9 q3.2 2.7 7.7 2.0" fill="none" stroke="#1a1a1a" stroke-width="1"/>
<path d="M837.3 668.5 L840.2 672.6" stroke="#6a6a6a" stroke-width="18.2" stroke-linecap="round"/><circle cx="840.2" cy="672.6" r="9.1" fill="url(#gbead)" stroke="#111" stroke-width="1.1"/><path d="M833.1 676.5 q3.2 2.7 7.7 2.0" fill="none" stroke="#1a1a1a" stroke-width="1"/>
<path d="M827.8 687.6 L830.6 691.8" stroke="#6a6a6a" stroke-width="18.2" stroke-linecap="round"/><circle cx="830.6" cy="691.8" r="9.1" fill="url(#gbead)" stroke="#111" stroke-width="1.1"/><path d="M823.5 695.6 q3.2 2.7 7.7 2.0" fill="none" stroke="#1a1a1a" stroke-width="1"/>
<path d="M819.0 705.1 L821.8 709.3" stroke="#6a6a6a" stroke-width="18.2" stroke-linecap="round"/><circle cx="821.8" cy="709.3" r="9.1" fill="url(#gbead)" stroke="#111" stroke-width="1.1"/><path d="M814.7 713.1 q3.2 2.7 7.7 2.0" fill="none" stroke="#1a1a1a" stroke-width="1"/>
<use href="#stoneA" transform="matrix(-9.07 -13.33 -7.01 13.99 511.7 504.6)"/>
<use href="#stoneB" transform="matrix(-9.07 -13.33 -7.01 13.99 493.3 541.3)"/>
<use href="#stoneA" transform="matrix(-16.24 0.49 -7.01 13.99 822.9 662.5)"/>
<use href="#stoneB" transform="matrix(-16.24 0.49 -7.01 13.99 804.6 699.1)"/>
<path d="M529.8 512.1 L525.2 513.0" stroke="#6a6a6a" stroke-width="18.2" stroke-linecap="round"/><circle cx="525.2" cy="513.0" r="9.1" fill="url(#gbead)" stroke="#111" stroke-width="1.1"/><path d="M518.1 516.8 q3.2 2.7 7.7 2.0" fill="none" stroke="#1a1a1a" stroke-width="1"/>
<path d="M521.0 529.6 L516.4 530.5" stroke="#6a6a6a" stroke-width="18.2" stroke-linecap="round"/><circle cx="516.4" cy="530.5" r="9.1" fill="url(#gbead)" stroke="#111" stroke-width="1.1"/><path d="M509.3 534.3 q3.2 2.7 7.7 2.0" fill="none" stroke="#1a1a1a" stroke-width="1"/>
<path d="M511.4 548.7 L506.9 549.6" stroke="#6a6a6a" stroke-width="18.2" stroke-linecap="round"/><circle cx="506.9" cy="549.6" r="9.1" fill="url(#gbead)" stroke="#111" stroke-width="1.1"/><path d="M499.8 553.5 q3.2 2.7 7.7 2.0" fill="none" stroke="#1a1a1a" stroke-width="1"/>
<path d="M502.6 566.2 L498.1 567.2" stroke="#6a6a6a" stroke-width="18.2" stroke-linecap="round"/><circle cx="498.1" cy="567.2" r="9.1" fill="url(#gbead)" stroke="#111" stroke-width="1.1"/><path d="M491.0 571.0 q3.2 2.7 7.7 2.0" fill="none" stroke="#1a1a1a" stroke-width="1"/>
<path d="M806.0 652.2 L807.9 656.4" stroke="#6a6a6a" stroke-width="18.2" stroke-linecap="round"/><circle cx="807.9" cy="656.4" r="9.1" fill="url(#gbead)" stroke="#111" stroke-width="1.1"/><path d="M800.8 660.2 q3.2 2.7 7.7 2.0" fill="none" stroke="#1a1a1a" stroke-width="1"/>
<path d="M797.2 669.7 L799.1 673.9" stroke="#6a6a6a" stroke-width="18.2" stroke-linecap="round"/><circle cx="799.1" cy="673.9" r="9.1" fill="url(#gbead)" stroke="#111" stroke-width="1.1"/><path d="M792.0 677.7 q3.2 2.7 7.7 2.0" fill="none" stroke="#1a1a1a" stroke-width="1"/>
<path d="M787.7 688.8 L789.6 693.0" stroke="#6a6a6a" stroke-width="18.2" stroke-linecap="round"/><circle cx="789.6" cy="693.0" r="9.1" fill="url(#gbead)" stroke="#111" stroke-width="1.1"/><path d="M782.5 696.8 q3.2 2.7 7.7 2.0" fill="none" stroke="#1a1a1a" stroke-width="1"/>
<path d="M778.9 706.3 L780.8 710.5" stroke="#6a6a6a" stroke-width="18.2" stroke-linecap="round"/><circle cx="780.8" cy="710.5" r="9.1" fill="url(#gbead)" stroke="#111" stroke-width="1.1"/><path d="M773.7 714.4 q3.2 2.7 7.7 2.0" fill="none" stroke="#1a1a1a" stroke-width="1"/>
<use href="#stoneA" transform="matrix(-11.76 -12.78 -7.01 13.99 537.7 537.3)"/>
<use href="#stoneA" transform="matrix(-17.36 -1.99 -7.01 13.99 780.9 660.6)"/>
<use href="#stoneB" transform="matrix(-11.76 -12.78 -7.01 13.99 519.4 573.9)"/>
<use href="#stoneB" transform="matrix(-17.36 -1.99 -7.01 13.99 762.6 697.3)"/>
<path d="M558.8 543.6 L554.9 545.3" stroke="#6a6a6a" stroke-width="18.2" stroke-linecap="round"/><circle cx="554.9" cy="545.3" r="9.1" fill="url(#gbead)" stroke="#111" stroke-width="1.1"/><path d="M547.8 549.1 q3.2 2.7 7.7 2.0" fill="none" stroke="#1a1a1a" stroke-width="1"/>
<path d="M550.0 561.2 L546.2 562.8" stroke="#6a6a6a" stroke-width="18.2" stroke-linecap="round"/><circle cx="546.2" cy="562.8" r="9.1" fill="url(#gbead)" stroke="#111" stroke-width="1.1"/><path d="M539.1 566.6 q3.2 2.7 7.7 2.0" fill="none" stroke="#1a1a1a" stroke-width="1"/>
<path d="M540.5 580.3 L536.6 581.9" stroke="#6a6a6a" stroke-width="18.2" stroke-linecap="round"/><circle cx="536.6" cy="581.9" r="9.1" fill="url(#gbead)" stroke="#111" stroke-width="1.1"/><path d="M529.5 585.8 q3.2 2.7 7.7 2.0" fill="none" stroke="#1a1a1a" stroke-width="1"/>
<path d="M531.7 597.8 L527.8 599.5" stroke="#6a6a6a" stroke-width="18.2" stroke-linecap="round"/><circle cx="527.8" cy="599.5" r="9.1" fill="url(#gbead)" stroke="#111" stroke-width="1.1"/><path d="M520.7 603.3 q3.2 2.7 7.7 2.0" fill="none" stroke="#1a1a1a" stroke-width="1"/>
<path d="M763.1 647.3 L764.0 651.3" stroke="#6a6a6a" stroke-width="18.2" stroke-linecap="round"/><circle cx="764.0" cy="651.3" r="9.1" fill="url(#gbead)" stroke="#111" stroke-width="1.1"/><path d="M756.9 655.2 q3.2 2.7 7.7 2.0" fill="none" stroke="#1a1a1a" stroke-width="1"/>
<path d="M754.4 664.8 L755.3 668.9" stroke="#6a6a6a" stroke-width="18.2" stroke-linecap="round"/><circle cx="755.3" cy="668.9" r="9.1" fill="url(#gbead)" stroke="#111" stroke-width="1.1"/><path d="M748.2 672.7 q3.2 2.7 7.7 2.0" fill="none" stroke="#1a1a1a" stroke-width="1"/>
<path d="M744.8 683.9 L745.7 688.0" stroke="#6a6a6a" stroke-width="18.2" stroke-linecap="round"/><circle cx="745.7" cy="688.0" r="9.1" fill="url(#gbead)" stroke="#111" stroke-width="1.1"/><path d="M738.6 691.8 q3.2 2.7 7.7 2.0" fill="none" stroke="#1a1a1a" stroke-width="1"/>
<path d="M736.0 701.4 L736.9 705.5" stroke="#6a6a6a" stroke-width="18.2" stroke-linecap="round"/><circle cx="736.9" cy="705.5" r="9.1" fill="url(#gbead)" stroke="#111" stroke-width="1.1"/><path d="M729.8 709.3 q3.2 2.7 7.7 2.0" fill="none" stroke="#1a1a1a" stroke-width="1"/>
<use href="#stoneA" transform="matrix(-14.05 -11.80 -7.01 13.99 570.0 568.0)"/>
<use href="#stoneB" transform="matrix(-14.05 -11.80 -7.01 13.99 551.6 604.7)"/>
<use href="#stoneA" transform="matrix(-17.89 -4.39 -7.01 13.99 736.9 652.6)"/>
<use href="#stoneB" transform="matrix(-17.89 -4.39 -7.01 13.99 718.5 689.3)"/>
<path d="M593.5 572.8 L590.5 575.1" stroke="#6a6a6a" stroke-width="18.2" stroke-linecap="round"/><circle cx="590.5" cy="575.1" r="9.1" fill="url(#gbead)" stroke="#111" stroke-width="1.1"/><path d="M583.4 578.9 q3.2 2.7 7.7 2.0" fill="none" stroke="#1a1a1a" stroke-width="1"/>
<path d="M584.7 590.3 L581.7 592.6" stroke="#6a6a6a" stroke-width="18.2" stroke-linecap="round"/><circle cx="581.7" cy="592.6" r="9.1" fill="url(#gbead)" stroke="#111" stroke-width="1.1"/><path d="M574.6 596.5 q3.2 2.7 7.7 2.0" fill="none" stroke="#1a1a1a" stroke-width="1"/>
<path d="M575.2 609.4 L572.1 611.8" stroke="#6a6a6a" stroke-width="18.2" stroke-linecap="round"/><circle cx="572.1" cy="611.8" r="9.1" fill="url(#gbead)" stroke="#111" stroke-width="1.1"/><path d="M565.0 615.6 q3.2 2.7 7.7 2.0" fill="none" stroke="#1a1a1a" stroke-width="1"/>
<path d="M566.4 627.0 L563.3 629.3" stroke="#6a6a6a" stroke-width="18.2" stroke-linecap="round"/><circle cx="563.3" cy="629.3" r="9.1" fill="url(#gbead)" stroke="#111" stroke-width="1.1"/><path d="M556.2 633.1 q3.2 2.7 7.7 2.0" fill="none" stroke="#1a1a1a" stroke-width="1"/>
<path d="M719.0 636.4 L718.8 640.2" stroke="#6a6a6a" stroke-width="18.2" stroke-linecap="round"/><circle cx="718.8" cy="640.2" r="9.1" fill="url(#gbead)" stroke="#111" stroke-width="1.1"/><path d="M711.7 644.0 q3.2 2.7 7.7 2.0" fill="none" stroke="#1a1a1a" stroke-width="1"/>
<path d="M710.2 653.9 L710.1 657.8" stroke="#6a6a6a" stroke-width="18.2" stroke-linecap="round"/><circle cx="710.1" cy="657.8" r="9.1" fill="url(#gbead)" stroke="#111" stroke-width="1.1"/><path d="M703.0 661.6 q3.2 2.7 7.7 2.0" fill="none" stroke="#1a1a1a" stroke-width="1"/>
<path d="M700.6 673.1 L700.5 676.9" stroke="#6a6a6a" stroke-width="18.2" stroke-linecap="round"/><circle cx="700.5" cy="676.9" r="9.1" fill="url(#gbead)" stroke="#111" stroke-width="1.1"/><path d="M693.4 680.7 q3.2 2.7 7.7 2.0" fill="none" stroke="#1a1a1a" stroke-width="1"/>
<path d="M691.8 690.6 L691.7 694.4" stroke="#6a6a6a" stroke-width="18.2" stroke-linecap="round"/><circle cx="691.7" cy="694.4" r="9.1" fill="url(#gbead)" stroke="#111" stroke-width="1.1"/><path d="M684.6 698.2 q3.2 2.7 7.7 2.0" fill="none" stroke="#1a1a1a" stroke-width="1"/>
<use href="#stoneA" transform="matrix(-17.81 -6.65 -7.01 13.99 692.2 638.8)"/>
<use href="#stoneA" transform="matrix(-15.85 -10.42 -7.01 13.99 607.4 595.8)"/>
<use href="#stoneB" transform="matrix(-17.81 -6.65 -7.01 13.99 673.9 675.5)"/>
<use href="#stoneB" transform="matrix(-15.85 -10.42 -7.01 13.99 589.0 632.4)"/>
<use href="#stoneA" transform="matrix(-17.12 -8.68 -7.01 13.99 648.6 619.7)"/>
<use href="#stoneB" transform="matrix(-17.12 -8.68 -7.01 13.99 630.2 656.3)"/>
<path d="M675.0 620.0 L673.8 623.4" stroke="#6a6a6a" stroke-width="18.2" stroke-linecap="round"/><circle cx="673.8" cy="623.4" r="9.1" fill="url(#gbead)" stroke="#111" stroke-width="1.1"/><path d="M666.7 627.2 q3.2 2.7 7.7 2.0" fill="none" stroke="#1a1a1a" stroke-width="1"/>
<path d="M666.2 637.5 L665.0 640.9" stroke="#6a6a6a" stroke-width="18.2" stroke-linecap="round"/><circle cx="665.0" cy="640.9" r="9.1" fill="url(#gbead)" stroke="#111" stroke-width="1.1"/><path d="M657.9 644.8 q3.2 2.7 7.7 2.0" fill="none" stroke="#1a1a1a" stroke-width="1"/>
<path d="M632.7 598.5 L630.5 601.5" stroke="#6a6a6a" stroke-width="18.2" stroke-linecap="round"/><circle cx="630.5" cy="601.5" r="9.1" fill="url(#gbead)" stroke="#111" stroke-width="1.1"/><path d="M623.4 605.3 q3.2 2.7 7.7 2.0" fill="none" stroke="#1a1a1a" stroke-width="1"/>
<path d="M623.9 616.0 L621.8 619.0" stroke="#6a6a6a" stroke-width="18.2" stroke-linecap="round"/><circle cx="621.8" cy="619.0" r="9.1" fill="url(#gbead)" stroke="#111" stroke-width="1.1"/><path d="M614.7 622.8 q3.2 2.7 7.7 2.0" fill="none" stroke="#1a1a1a" stroke-width="1"/>
<path d="M656.6 656.6 L655.5 660.1" stroke="#6a6a6a" stroke-width="18.2" stroke-linecap="round"/><circle cx="655.5" cy="660.1" r="9.1" fill="url(#gbead)" stroke="#111" stroke-width="1.1"/><path d="M648.4 663.9 q3.2 2.7 7.7 2.0" fill="none" stroke="#1a1a1a" stroke-width="1"/>
<path d="M647.8 674.2 L646.7 677.6" stroke="#6a6a6a" stroke-width="18.2" stroke-linecap="round"/><circle cx="646.7" cy="677.6" r="9.1" fill="url(#gbead)" stroke="#111" stroke-width="1.1"/><path d="M639.6 681.4 q3.2 2.7 7.7 2.0" fill="none" stroke="#1a1a1a" stroke-width="1"/>
<path d="M614.3 635.2 L612.2 638.1" stroke="#6a6a6a" stroke-width="18.2" stroke-linecap="round"/><circle cx="612.2" cy="638.1" r="9.1" fill="url(#gbead)" stroke="#111" stroke-width="1.1"/><path d="M605.1 641.9 q3.2 2.7 7.7 2.0" fill="none" stroke="#1a1a1a" stroke-width="1"/>
<path d="M605.5 652.7 L603.4 655.6" stroke="#6a6a6a" stroke-width="18.2" stroke-linecap="round"/><circle cx="603.4" cy="655.6" r="9.1" fill="url(#gbead)" stroke="#111" stroke-width="1.1"/><path d="M596.3 659.5 q3.2 2.7 7.7 2.0" fill="none" stroke="#1a1a1a" stroke-width="1"/></g>
<ellipse cx="729.5" cy="463.6" rx="268.5" ry="157.0" transform="rotate(27.27 729.5 463.6)" fill="#595959" stroke="#000" stroke-width="1.3"/>
<clipPath id="cpplate"><ellipse cx="732.9" cy="456.9" rx="267.5" ry="156.0" transform="rotate(27.27 732.9 456.9)" /></clipPath>
<g clip-path="url(#cpplate)">
<ellipse cx="730.6" cy="460.8" rx="250.0" ry="150.4" transform="rotate(26.60 730.6 460.8)" fill="#6d6d6d"/>
<path d="M919.5 559.3 L919.2 559.8 L919.0 560.3 L918.7 560.8 L918.5 561.3 L918.2 561.8 L917.9 562.3 L917.7 562.7 L917.4 563.2 L917.1 563.7 L916.8 564.2 L916.5 564.7 L916.2 565.2 L915.9 565.6 L915.6 566.1 L915.3 566.6 L915.0 567.0 L914.7 567.5 L914.4 568.0 L914.1 568.4 L913.8 568.9 L913.4 569.4 L913.1 569.8 L912.8 570.3 L920.7 575.5 L922.9 577.5 L924.4 579.1 L925.6 580.5 L926.5 581.7 L927.2 582.9 L927.8 583.9 L928.3 584.9 L928.6 585.9 L928.9 586.8 L929.2 587.7 L929.3 588.5 L929.4 589.3 L929.4 590.1 L929.4 590.8 L929.4 591.5 L929.2 592.2 L929.1 592.9 L928.9 593.5 L928.6 594.1 L928.3 594.7 L928.0 595.2 L927.6 595.7 L927.2 596.2 L926.7 596.7 L926.2 597.1 L925.7 597.6 L925.1 597.9 L924.5 598.3 L923.9 598.6 L923.2 598.9 L922.5 599.2 L921.7 599.5 L920.9 599.7 L920.0 599.9 L919.1 600.0 L918.2 600.1 L917.2 600.2 L916.2 600.2 L915.1 600.2 L913.9 600.1 L912.6 600.0 L911.3 599.8 L909.9 599.5 L908.4 599.2 L906.7 598.7 L904.8 598.0 L902.6 597.1 L899.8 595.7 L899.4 596.1 L899.6 597.1 L899.8 598.0 L900.0 598.9 L900.1 599.8 L900.1 600.6 L900.2 601.5 L900.2 602.3 L900.1 603.0 L900.1 603.8 L900.0 604.5 L899.8 605.2 L899.7 605.9 L899.5 606.6 L899.3 607.3 L899.0 607.9 L898.8 608.5 L898.5 609.1 L898.2 609.7 L897.8 610.3 L897.5 610.8 L897.1 611.3 L896.7 611.8 L896.3 612.3 L895.8 612.8 L895.3 613.3 L894.8 613.7 L894.3 614.2 L893.8 614.6 L893.2 615.0 L892.7 615.3 L892.1 615.7 L891.5 616.0 L890.9 616.4 L890.2 616.7 L889.6 617.0 L888.9 617.3 L888.2 617.5 L887.5 617.8 L886.7 618.0 L886.0 618.2 L885.2 618.4 L884.4 618.6 L883.6 618.7 L882.8 618.9 L882.0 619.0 L881.1 619.1 L880.3 619.2 L879.4 619.2 L878.5 619.3 L877.6 619.3 L876.6 619.3 L875.7 619.3 L874.7 619.3 L873.8 619.2 L872.8 619.1 L871.7 619.0 L870.7 618.9 L869.7 618.8 L868.6 618.6 L867.5 618.4 L866.4 618.2 L865.3 617.9 L864.2 617.6 L863.0 617.3 L861.8 617.0 L860.6 616.6 L859.4 616.2 L858.2 615.8 L856.9 615.3 L855.6 614.8 L854.3 614.3 L852.9 613.7 L851.5 613.0 L850.1 612.3 L848.6 611.5 L847.1 610.6 L845.5 609.7 L843.8 608.6 L842.0 607.4 L840.1 606.0 L839.2 605.8 L838.5 605.9 L837.8 606.0 L837.1 606.1 L836.4 606.3 L835.7 606.4 L835.0 606.5 L834.3 606.6 L833.6 606.7 L832.9 606.8 L832.2 606.9 L831.4 607.0 L830.7 607.1 L830.0 607.2 L829.3 607.3 L828.6 607.4 L827.8 607.5 L827.1 607.6 L826.4 607.6 L825.7 607.7 L824.9 607.8 L824.2 607.9 L823.5 607.9 L822.7 608.0 L822.0 608.1 L821.2 608.1 L820.5 608.2 L819.8 608.2 L819.0 608.3 L818.3 608.3 L817.5 608.4 L816.8 608.4 L816.0 608.5 L815.3 608.5 L814.5 608.6 L813.7 608.6 L813.0 608.6 L812.2 608.6 L811.5 608.7 L810.7 608.7 L809.9 608.7 L809.2 608.7 L808.4 608.7 L807.6 608.8 L806.9 608.8 L806.1 608.8 L805.3 608.8 L804.5 608.8 L803.8 608.8 L803.0 608.8 L802.2 608.8 L801.4 608.8 L800.6 608.7 L799.8 608.7 L799.1 608.7 L798.3 608.7 L797.5 608.7 L796.7 608.6 L795.9 608.6 L795.1 608.6 L794.3 608.5 L793.5 608.5 L792.7 608.5 L791.9 608.4 L791.1 608.4 L790.3 608.3 L789.5 608.3 L788.7 608.2 L787.9 608.2 L787.1 608.1 L786.3 608.0 L785.5 608.0 L784.7 607.9 L783.9 607.8 L783.1 607.8 L782.3 607.7 L781.5 607.6 L780.7 607.5 L779.8 607.4 L779.0 607.4 L778.2 607.3 L777.4 607.2 L776.6 607.1 L775.8 607.0 L774.9 606.9 L774.1 606.8 L773.3 606.7 L772.5 606.6 L771.7 606.5 L770.8 606.3 L770.0 606.2 L769.2 606.1 L768.4 606.0 L767.5 605.9 L766.7 605.7 L765.9 605.6 L765.1 605.5 L764.2 605.3 L763.4 605.2 L762.6 605.1 L761.7 604.9 L760.9 604.8 L760.1 604.6 L759.2 604.5 L758.4 604.3 L757.6 604.1 L756.7 604.0 L755.9 603.8 L755.1 603.7 L754.2 603.5 L753.4 603.3 L752.6 603.1 L751.7 603.0 L750.9 602.8 L750.0 602.6 L749.2 602.4 L748.4 602.2 L747.5 602.1 L746.7 601.9 L745.8 601.7 L745.0 601.5 L744.2 601.3 L743.3 601.1 L742.5 600.9 L741.6 600.7 L740.8 600.4 L740.0 600.2 L739.1 600.0 L738.3 599.8 L737.4 599.6 L736.6 599.4 L735.7 599.1 L734.9 598.9 L734.1 598.7 L733.2 598.4 L732.4 598.2 L731.5 598.0 L730.7 597.7 L729.8 597.5 L729.0 597.2 L728.2 597.0 L727.3 596.7 L726.5 596.5 L725.6 596.2 L724.8 596.0 L723.9 595.7 L723.1 595.4 L722.2 595.2 L721.4 594.9 L720.6 594.6 L719.7 594.4 L718.9 594.1 L718.0 593.8 L717.2 593.5 L716.4 593.2 L715.5 593.0 L714.7 592.7 L713.1 598.4 L712.0 599.8 L711.0 600.7 L709.9 601.4 L708.9 602.0 L707.9 602.4 L706.9 602.7 L705.8 603.0 L704.8 603.1 L703.8 603.3 L702.8 603.3 L701.8 603.3 L700.8 603.3 L699.8 603.3 L698.8 603.2 L697.8 603.0 L696.8 602.9 L695.9 602.7 L694.9 602.4 L693.9 602.2 L693.0 601.9 L692.0 601.6 L691.0 601.2 L690.1 600.8 L689.2 600.4 L688.2 600.0 L687.3 599.5 L686.4 599.0 L685.5 598.5 L684.6 598.0 L683.8 597.4 L682.9 596.8 L682.1 596.2 L681.2 595.5 L680.4 594.8 L679.6 594.1 L678.8 593.3 L678.1 592.5 L677.3 591.7 L676.6 590.8 L676.0 589.8 L675.3 588.8 L674.7 587.7 L674.2 586.5 L673.7 585.2 L673.4 583.6 L673.2 581.7 L673.7 578.5 L672.6 578.7 L671.5 578.8 L670.4 578.9 L669.3 579.0 L668.2 579.1 L667.1 579.1 L666.1 579.1 L665.0 579.0 L663.9 579.0 L662.9 578.9 L661.8 578.8 L660.8 578.7 L659.7 578.5 L658.7 578.3 L657.7 578.1 L656.7 577.9 L655.6 577.7 L654.6 577.5 L653.6 577.2 L652.6 576.9 L651.7 576.6 L650.7 576.3 L649.7 576.0 L648.7 575.7 L647.8 575.3 L646.8 575.0 L645.9 574.6 L645.0 574.2 L644.0 573.8 L643.1 573.4 L642.2 572.9 L641.3 572.5 L640.4 572.0 L639.5 571.5 L638.7 571.1 L637.8 570.6 L636.9 570.0 L636.1 569.5 L635.3 569.0 L634.4 568.5 L633.6 567.9 L632.8 567.3 L632.0 566.8 L631.2 566.2 L630.5 565.6 L629.7 565.0 L629.0 564.3 L628.2 563.7 L627.5 563.1 L626.8 562.4 L626.1 561.8 L625.4 561.1 L624.8 560.4 L624.1 559.7 L623.5 559.0 L622.9 558.3 L622.3 557.6 L621.7 556.9 L621.1 556.1 L620.6 555.4 L620.1 554.6 L619.5 553.8 L619.1 553.0 L618.6 552.2 L618.1 551.4 L617.7 550.6 L617.3 549.8 L616.9 549.0 L616.6 548.1 L616.3 547.2 L616.0 546.4 L615.7 545.5 L615.5 544.6 L615.3 543.6 L615.1 542.7 L615.0 541.7 L615.0 540.7 L615.0 539.7 L615.0 538.7 L614.7 537.9 L614.0 537.4 L613.3 536.8 L612.7 536.3 L612.0 535.7 L611.3 535.2 L610.7 534.6 L610.0 534.1 L609.3 533.5 L608.7 533.0 L608.0 532.4 L607.4 531.9 L606.7 531.3 L606.0 530.7 L605.4 530.2 L604.8 529.6 L604.1 529.1 L603.5 528.5 L602.8 527.9 L602.2 527.4 L601.6 526.8 L600.9 526.2 L600.3 525.6 L599.7 525.1 L599.0 524.5 L598.4 523.9 L597.8 523.4 L597.2 522.8 L596.6 522.2 L595.9 521.6 L595.3 521.0 L594.7 520.5 L594.1 519.9 L593.5 519.3 L592.9 518.7 L592.3 518.1 L591.7 517.5 L591.1 516.9 L590.5 516.4 L590.0 515.8 L589.4 515.2 L588.8 514.6 L588.2 514.0 L587.6 513.4 L587.1 512.8 L586.5 512.2 L585.9 511.6 L585.4 511.0 L584.8 510.4 L584.2 509.8 L583.7 509.2 L583.1 508.6 L582.6 508.0 L582.0 507.4 L581.5 506.8 L580.9 506.2 L580.4 505.6 L579.9 505.0 L579.3 504.4 L578.8 503.8 L578.3 503.2 L577.7 502.6 L577.2 502.0 L576.7 501.3 L576.2 500.7 L575.7 500.1 L575.1 499.5 L574.6 498.9 L574.1 498.3 L573.6 497.7 L573.1 497.1 L572.6 496.4 L572.1 495.8 L571.6 495.2 L571.2 494.6 L570.7 494.0 L570.2 493.3 L569.7 492.7 L569.2 492.1 L568.8 491.5 L568.3 490.9 L567.8 490.2 L567.4 489.6 L566.9 489.0 L566.4 488.4 L566.0 487.8 L565.5 487.1 L565.1 486.5 L564.6 485.9 L564.2 485.3 L563.8 484.6 L563.3 484.0 L562.9 483.4 L562.5 482.8 L562.0 482.1 L561.6 481.5 L561.2 480.9 L560.8 480.2 L560.4 479.6 L559.9 479.0 L559.5 478.4 L559.1 477.7 L558.7 477.1 L558.3 476.5 L557.9 475.8 L557.6 475.2 L557.2 474.6 L556.8 474.0 L556.4 473.3 L556.0 472.7 L555.6 472.1 L555.3 471.4 L554.9 470.8 L554.5 470.2 L554.2 469.5 L553.8 468.9 L553.5 468.3 L553.1 467.6 L552.8 467.0 L552.4 466.4 L552.1 465.7 L551.7 465.1 L551.4 464.5 L551.1 463.8 L550.8 463.2 L550.4 462.6 L550.1 462.0 L549.8 461.3 L549.5 460.7 L549.2 460.1 L548.9 459.4 L548.6 458.8 L548.3 458.2 L548.0 457.5 L547.7 456.9 L547.4 456.3 L547.1 455.6 L546.8 455.0 L546.5 454.4 L546.3 453.7 L546.0 453.1 L545.7 452.5 L545.4 451.9 L545.2 451.2 L544.9 450.6 L544.7 450.0 L544.4 449.3 L544.2 448.7 L543.9 448.1 L543.7 447.4 L543.4 446.8 L543.2 446.2 L543.0 445.6 L542.8 444.9 L542.5 444.3 L542.3 443.7 L542.1 443.1 L541.9 442.4 L541.7 441.8 L541.5 441.2 L541.3 440.6 L541.1 439.9 L526.7 437.5 L523.8 436.4 L521.6 435.5 L519.8 434.6 L518.2 433.7 L516.8 432.8 L515.6 432.0 L514.5 431.1 L513.4 430.3 L512.5 429.5 L511.6 428.7 L510.8 427.8 L510.1 427.0 L509.4 426.2 L508.8 425.5 L508.2 424.7 L507.7 423.9 L507.3 423.1 L506.9 422.4 L506.5 421.6 L506.2 420.9 L505.9 420.1 L505.6 419.4 L505.5 418.7 L505.3 418.0 L505.2 417.3 L505.2 416.6 L505.1 415.9 L505.2 415.2 L505.2 414.5 L505.4 413.9 L505.5 413.2 L505.8 412.6 L506.0 412.0 L506.3 411.4 L506.7 410.8 L507.2 410.2 L507.7 409.7 L508.2 409.2 L508.9 408.7 L509.6 408.2 L510.4 407.7 L511.3 407.3 L512.3 406.9 L513.5 406.6 L514.8 406.3 L516.5 406.1 L518.5 406.0 L521.3 406.1 L521.1 405.5 L520.2 404.6 L519.3 403.7 L518.4 402.8 L517.6 401.9 L516.8 401.1 L516.1 400.2 L515.4 399.4 L514.8 398.5 L514.2 397.7 L513.6 396.9 L513.1 396.1 L512.6 395.2 L512.1 394.4 L511.7 393.6 L511.3 392.9 L510.9 392.1 L510.5 391.3 L510.2 390.5 L509.9 389.8 L509.7 389.0 L509.4 388.3 L509.2 387.5 L509.0 386.8 L508.9 386.1 L508.7 385.4 L508.6 384.7 L508.6 384.0 L508.5 383.3 L508.5 382.6 L508.5 381.9 L508.5 381.3 L508.5 380.6 L508.6 380.0 L508.7 379.3 L508.8 378.7 L509.0 378.1 L509.1 377.5 L509.3 376.9 L509.5 376.3 L509.8 375.7 L510.0 375.1 L510.3 374.6 L510.6 374.0 L511.0 373.5 L511.3 372.9 L511.7 372.4 L512.2 371.9 L512.6 371.4 L513.1 371.0 L513.5 370.5 L514.1 370.1 L514.6 369.6 L515.2 369.2 L515.8 368.8 L516.4 368.4 L517.0 368.0 L517.7 367.6 L518.4 367.3 L519.2 367.0 L519.9 366.7 L520.8 366.4 L521.6 366.1 L522.5 365.8 L523.4 365.6 L524.3 365.4 L525.3 365.2 L526.3 365.1 L527.4 364.9 L528.5 364.8 L529.7 364.7 L530.9 364.7 L532.2 364.7 L533.5 364.7 L534.9 364.8 L536.4 364.9 L538.0 365.1 L539.7 365.3 L540.4 365.1 L540.7 364.6 L541.0 364.1 L541.3 363.6 L541.6 363.2 L541.8 362.7 L542.1 362.2 L542.4 361.7 L542.7 361.3 L543.0 360.8 L543.4 360.3 L543.7 359.9 L544.0 359.4 L544.3 358.9 L544.6 358.5 L545.0 358.0 L545.3 357.5 L545.6 357.1 L546.0 356.6 L546.3 356.2 L546.6 355.7 L547.0 355.3 L547.3 354.9 L547.7 354.4 L548.1 354.0 L548.4 353.5 L548.8 353.1 L549.2 352.7 L549.5 352.2 L549.9 351.8 L550.3 351.4 L550.7 350.9 L551.0 350.5 L551.4 350.1 L551.8 349.7 L552.2 349.3 L552.6 348.9 L553.0 348.4 L553.4 348.0 L553.8 347.6 L554.3 347.2 L554.7 346.8 L555.1 346.4 L555.5 346.0 L555.9 345.6 L556.4 345.2 L556.8 344.8 L557.2 344.4 L557.7 344.0 L558.1 343.7 L558.6 343.3 L559.0 342.9 L559.5 342.5 L559.9 342.1 L560.4 341.8 L560.8 341.4 L561.3 341.0 L561.8 340.7 L562.2 340.3 L562.7 339.9 L563.2 339.6 L563.7 339.2 L564.2 338.9 L564.6 338.5 L565.1 338.2 L565.6 337.8 L566.1 337.5 L566.6 337.1 L567.1 336.8 L567.6 336.4 L568.1 336.1 L568.7 335.8 L569.2 335.4 L569.7 335.1 L570.2 334.8 L570.7 334.5 L571.3 334.1 L571.8 333.8 L572.3 333.5 L572.9 333.2 L573.4 332.9 L573.9 332.6 L574.5 332.3 L575.0 332.0 L575.6 331.7 L576.1 331.4 L576.7 331.1 L577.3 330.8 L577.8 330.5 L578.4 330.2 L578.9 329.9 L579.5 329.6 L580.1 329.3 L580.7 329.1 L581.3 328.8 L581.8 328.5 L582.4 328.2 L583.0 328.0 L583.6 327.7 L584.2 327.4 L584.8 327.2 L585.4 326.9 L586.0 326.7 L586.6 326.4 L587.2 326.2 L587.8 325.9 L588.4 325.7 L589.0 325.4 L589.7 325.2 L590.3 325.0 L590.9 324.7 L591.5 324.5 L592.2 324.3 L592.8 324.0 L593.4 323.8 L594.1 323.6 L594.7 323.4 L595.3 323.2 L596.0 323.0 L596.6 322.7 L597.3 322.5 L597.9 322.3 L598.6 322.1 L599.2 321.9 L599.9 321.7 L600.6 321.5 L601.2 321.3 L601.9 321.2 L602.6 321.0 L603.2 320.8 L603.9 320.6 L604.6 320.4 L605.2 320.3 L605.9 320.1 L606.6 319.9 L607.3 319.7 L608.0 319.6 L608.7 319.4 L609.4 319.3 L610.1 319.1 L610.8 319.0 L611.5 318.8 L612.2 318.7 L612.9 318.5 L613.6 318.4 L614.3 318.2 L615.0 318.1 L615.7 318.0 L616.4 317.8 L617.1 317.7 L617.8 317.6 L618.6 317.5 L619.3 317.3 L620.0 317.2 L620.7 317.1 L621.5 317.0 L622.2 316.9 L622.9 316.8 L623.7 316.7 L624.4 316.6 L625.1 316.5 L621.3 309.8 L620.6 307.6 L620.3 306.0 L620.3 304.7 L620.4 303.5 L620.6 302.6 L620.9 301.7 L621.3 300.9 L621.7 300.2 L622.1 299.5 L622.6 298.9 L623.2 298.4 L623.8 297.9 L624.4 297.4 L625.0 297.0 L625.7 296.7 L626.4 296.3 L627.1 296.1 L627.9 295.8 L628.7 295.6 L629.5 295.4 L630.3 295.3 L631.1 295.2 L632.0 295.1 L632.9 295.0 L633.8 295.0 L634.7 295.0 L635.6 295.1 L636.6 295.2 L637.6 295.3 L638.5 295.5 L639.6 295.7 L640.6 295.9 L641.6 296.2 L642.7 296.5 L643.7 296.8 L644.8 297.2 L646.0 297.6 L647.1 298.1 L648.2 298.7 L649.4 299.3 L650.6 299.9 L651.8 300.7 L653.1 301.5 L654.4 302.4 L655.8 303.5 L657.2 304.8 L658.8 306.4 L660.6 308.5 L661.4 308.5 L661.9 307.8 L662.5 307.2 L663.1 306.6 L663.7 306.1 L664.4 305.6 L665.1 305.1 L665.7 304.6 L666.4 304.2 L667.1 303.8 L667.9 303.5 L668.6 303.1 L669.4 302.8 L670.2 302.5 L670.9 302.3 L671.7 302.0 L672.5 301.8 L673.4 301.6 L674.2 301.4 L675.0 301.3 L675.9 301.2 L676.7 301.0 L677.6 300.9 L678.5 300.9 L679.4 300.8 L680.3 300.8 L681.2 300.8 L682.1 300.8 L683.0 300.8 L683.9 300.8 L684.8 300.9 L685.8 301.0 L686.7 301.1 L687.6 301.2 L688.6 301.3 L689.5 301.5 L690.5 301.7 L691.5 301.8 L692.4 302.0 L693.4 302.3 L694.4 302.5 L695.3 302.8 L696.3 303.0 L697.3 303.3 L698.3 303.7 L699.3 304.0 L700.2 304.3 L701.2 304.7 L702.2 305.1 L703.2 305.5 L704.2 305.9 L705.2 306.4 L706.2 306.8 L707.2 307.3 L708.1 307.8 L709.1 308.3 L710.1 308.9 L711.1 309.4 L712.1 310.0 L713.1 310.6 L714.1 311.2 L715.0 311.9 L716.0 312.6 L717.0 313.3 L717.9 314.0 L718.9 314.7 L719.9 315.5 L720.8 316.3 L721.8 317.2 L722.7 318.0 L723.6 318.9 L724.6 319.9 L725.5 320.9 L726.4 321.9 L727.3 323.0 L728.2 324.2 L729.1 325.4 L730.0 326.7 L730.8 327.2 L731.7 327.5 L732.6 327.8 L733.4 328.0 L734.3 328.3 L735.2 328.6 L736.0 328.9 L736.9 329.1 L737.8 329.4 L738.6 329.7 L739.5 330.0 L740.4 330.3 L741.2 330.5 L742.1 330.8 L743.0 331.1 L743.8 331.4 L744.7 331.7 L745.6 332.0 L746.4 332.3 L747.3 332.6 L748.1 333.0 L749.0 333.3 L749.9 333.6 L750.7 333.9 L751.6 334.2 L752.5 334.5 L753.3 334.9 L754.2 335.2 L755.0 335.5 L755.9 335.9 L756.8 336.2 L757.6 336.5 L758.5 336.9 L759.3 337.2 L760.2 337.5 L761.1 337.9 L761.9 338.2 L762.8 338.6 L763.6 338.9 L764.5 339.3 L765.3 339.7 L766.2 340.0 L767.0 340.4 L767.9 340.7 L768.7 341.1 L769.6 341.5 L770.4 341.9 L771.3 342.2 L772.1 342.6 L773.0 343.0 L773.8 343.4 L774.7 343.8 L775.5 344.1 L776.4 344.5 L777.2 344.9 L778.0 345.3 L778.9 345.7 L779.7 346.1 L780.6 346.5 L781.4 346.9 L782.2 347.3 L783.1 347.7 L783.9 348.1 L784.7 348.5 L785.6 348.9 L786.4 349.4 L787.2 349.8 L788.1 350.2 L788.9 350.6 L789.7 351.0 L790.5 351.5 L791.4 351.9 L792.2 352.3 L793.0 352.8 L793.8 353.2 L794.7 353.6 L795.5 354.1 L796.3 354.5 L797.1 355.0 L797.9 355.4 L798.7 355.8 L799.5 356.3 L800.4 356.7 L801.2 357.2 L802.0 357.7 L802.8 358.1 L803.6 358.6 L804.4 359.0 L805.2 359.5 L806.0 360.0 L806.8 360.4 L807.6 360.9 L808.4 361.4 L809.2 361.8 L810.0 362.3 L810.8 362.8 L811.6 363.3 L812.4 363.7 L813.1 364.2 L813.9 364.7 L814.7 365.2 L815.5 365.7 L816.3 366.2 L817.1 366.7 L817.8 367.2 L818.6 367.7 L819.4 368.2 L820.2 368.7 L820.9 369.2 L821.7 369.7 L822.5 370.2 L823.2 370.7 L824.0 371.2 L824.7 371.7 L825.5 372.2 L826.3 372.7 L827.0 373.2 L827.8 373.7 L828.5 374.3 L829.3 374.8 L830.0 375.3 L830.8 375.8 L831.5 376.4 L832.3 376.9 L833.0 377.4 L833.7 377.9 L834.5 378.5 L835.2 379.0 L835.9 379.5 L836.7 380.1 L837.4 380.6 L838.1 381.2 L838.9 381.7 L839.6 382.2 L840.3 382.8 L841.0 383.3 L841.7 383.9 L842.5 384.4 L843.2 385.0 L843.9 385.5 L844.6 386.1 L845.3 386.7 L846.0 387.2 L846.7 387.8 L847.4 388.3 L848.1 388.9 L848.8 389.5 L849.5 390.0 L850.2 390.6 L850.8 391.1 L851.5 391.7 L852.2 392.3 L852.9 392.9 L853.6 393.4 L854.2 394.0 L854.9 394.6 L855.6 395.2 L856.3 395.7 L856.9 396.3 L857.6 396.9 L858.3 397.5 L864.7 395.1 L867.3 394.8 L869.3 394.7 L871.1 394.8 L872.7 395.0 L874.2 395.3 L875.6 395.6 L877.0 395.9 L878.3 396.3 L879.5 396.8 L880.7 397.2 L881.8 397.7 L882.9 398.2 L884.0 398.7 L885.0 399.2 L886.0 399.8 L886.9 400.4 L887.8 401.0 L888.7 401.6 L889.6 402.2 L890.4 402.8 L891.2 403.5 L891.9 404.1 L892.6 404.8 L893.3 405.5 L894.0 406.2 L894.6 406.9 L895.2 407.6 L895.8 408.4 L896.3 409.1 L896.8 409.8 L897.2 410.6 L897.6 411.4 L898.0 412.2 L898.3 412.9 L898.6 413.7 L898.9 414.6 L899.1 415.4 L899.2 416.2 L899.3 417.0 L899.3 417.9 L899.2 418.8 L899.1 419.7 L898.8 420.6 L898.5 421.5 L898.0 422.4 L897.2 423.4 L896.2 424.5 L894.5 425.7 L895.1 426.3 L896.4 426.8 L897.7 427.3 L898.9 427.8 L900.1 428.3 L901.3 428.9 L902.4 429.5 L903.5 430.0 L904.6 430.6 L905.6 431.2 L906.7 431.8 L907.7 432.4 L908.6 433.0 L909.6 433.6 L910.5 434.3 L911.4 434.9 L912.3 435.6 L913.1 436.2 L914.0 436.9 L914.8 437.5 L915.6 438.2 L916.3 438.9 L917.1 439.6 L917.8 440.3 L918.5 440.9 L919.2 441.6 L919.8 442.3 L920.5 443.0 L921.1 443.7 L921.7 444.5 L922.3 445.2 L922.8 445.9 L923.4 446.6 L923.9 447.3 L924.4 448.0 L924.8 448.8 L925.3 449.5 L925.7 450.2 L926.1 450.9 L926.5 451.7 L926.9 452.4 L927.2 453.1 L927.5 453.9 L927.8 454.6 L928.1 455.3 L928.3 456.0 L928.5 456.8 L928.7 457.5 L928.9 458.2 L929.1 459.0 L929.2 459.7 L929.3 460.4 L929.3 461.1 L929.4 461.9 L929.4 462.6 L929.4 463.3 L929.3 464.0 L929.3 464.7 L929.2 465.4 L929.0 466.1 L928.9 466.8 L928.7 467.5 L928.4 468.2 L928.2 468.9 L927.9 469.6 L927.5 470.2 L927.1 470.9 L926.7 471.6 L926.2 472.2 L925.7 472.9 L925.1 473.5 L924.4 474.1 L923.7 474.8 L923.0 475.4 L922.1 476.0 L921.2 476.5 L920.1 477.1 L918.9 477.7 L918.8 478.3 L919.0 478.9 L919.3 479.6 L919.5 480.2 L919.8 480.9 L920.0 481.5 L920.3 482.2 L920.5 482.8 L920.7 483.4 L921.0 484.1 L921.2 484.7 L921.4 485.4 L921.6 486.0 L921.8 486.7 L922.0 487.3 L922.3 488.0 L922.5 488.6 L922.7 489.2 L922.9 489.9 L923.0 490.5 L923.2 491.2 L923.4 491.8 L923.6 492.4 L923.8 493.1 L924.0 493.7 L924.1 494.3 L924.3 495.0 L924.5 495.6 L924.6 496.3 L924.8 496.9 L924.9 497.5 L925.1 498.2 L925.2 498.8 L925.4 499.4 L925.5 500.1 L925.6 500.7 L925.8 501.3 L925.9 501.9 L926.0 502.6 L926.1 503.2 L926.2 503.8 L926.4 504.4 L926.5 505.1 L926.6 505.7 L926.7 506.3 L926.8 506.9 L926.9 507.6 L926.9 508.2 L927.0 508.8 L927.1 509.4 L927.2 510.1 L927.3 510.7 L927.3 511.3 L927.4 511.9 L927.5 512.5 L927.5 513.1 L927.6 513.7 L927.6 514.4 L927.7 515.0 L927.7 515.6 L927.8 516.2 L927.8 516.8 L927.8 517.4 L927.9 518.0 L927.9 518.6 L927.9 519.2 L927.9 519.8 L927.9 520.4 L927.9 521.0 L927.9 521.6 L927.9 522.2 L927.9 522.8 L927.9 523.4 L927.9 524.0 L927.9 524.6 L927.9 525.2 L927.9 525.8 L927.9 526.4 L927.8 527.0 L927.8 527.6 L927.8 528.2 L927.7 528.7 L927.7 529.3 L927.6 529.9 L927.6 530.5 L927.5 531.1 L927.5 531.7 L927.4 532.2 L927.3 532.8 L927.3 533.4 L927.2 534.0 L927.1 534.5 L927.0 535.1 L926.9 535.7 L926.9 536.2 L926.8 536.8 L926.7 537.4 L926.6 537.9 L926.5 538.5 L926.3 539.1 L926.2 539.6 L926.1 540.2 L926.0 540.8 L925.9 541.3 L925.8 541.9 L925.6 542.4 L925.5 543.0 L925.4 543.5 L925.2 544.1 L925.1 544.6 L924.9 545.2 L924.8 545.7 L924.6 546.3 L924.4 546.8 L924.3 547.3 L924.1 547.9 L923.9 548.4 L923.8 548.9 L923.6 549.5 L923.4 550.0 L923.2 550.5 L923.0 551.1 L922.8 551.6 L922.6 552.1 L922.4 552.6 L922.2 553.2 L922.0 553.7 L921.8 554.2 L921.6 554.7 L921.4 555.2 L921.2 555.7 L920.9 556.3 L920.7 556.8 L920.5 557.3 L920.2 557.8 L920.0 558.3 L919.7 558.8 Z" fill="#565656" stroke="#000" stroke-width="1.2" stroke-linejoin="round"/>
<path d="M621.8 299.3 C623.2 293.0 623.9 292.7 626.3 290.9 C628.6 289.2 632.3 288.8 636.0 288.8 C639.7 288.8 644.6 289.4 648.6 290.9 C652.5 292.4 657.4 295.8 659.7 297.9 C662.1 300.0 663.9 296.0 662.5 303.5 C661.1 310.9 656.5 335.1 651.4 342.5 C646.3 350.0 637.4 350.4 631.8 348.1 C626.3 345.8 619.6 336.7 617.9 328.6 C616.2 320.4 620.4 305.6 621.8 299.3 Z" fill="url(#gcylA)" stroke="#000" stroke-width="1.15" stroke-linejoin="round" />
<path d="M626.5 321.9 L638.1 316.0 L655.6 331.4 L648.6 343.9 L636.0 335.6 Z" fill="url(#gtubeA)" stroke="#111" stroke-width="0.8" stroke-linejoin="round" />
<g transform="translate(632.5 319.9) rotate(-20)"><ellipse rx="6.2" ry="4.0" fill="#10161c" stroke="#111" stroke-width=".7"/><path d="M-1.5 0.9 L-5.2 -1.2" stroke="#a9cfe6" stroke-width=".9"/><path d="M-1.2 0.5 L-4.1 -2.4" stroke="#a9cfe6" stroke-width=".9"/><path d="M-0.7 0.3 L-2.4 -3.2" stroke="#a9cfe6" stroke-width=".9"/><path d="M-0.1 0.2 L-0.4 -3.6" stroke="#a9cfe6" stroke-width=".9"/><path d="M0.5 0.2 L1.7 -3.4" stroke="#a9cfe6" stroke-width=".9"/><path d="M1.0 0.4 L3.6 -2.8" stroke="#a9cfe6" stroke-width=".9"/><path d="M1.4 0.7 L4.9 -1.7" stroke="#a9cfe6" stroke-width=".9"/></g>
<path d="M700.2 299.6 L715.5 304.9 L726.7 314.6 L730.9 322.3 L759.5 367.6 L737.8 359.3 Z" fill="#595959" stroke="#000" stroke-width="1.15" stroke-linejoin="round" />
<path d="M662.5 303.5 L663.9 300.0 L669.5 296.8 L679.3 295.4 L690.4 296.2 L700.2 299.6 L737.8 359.3 L723.9 363.7 L697.4 355.4 Z" fill="url(#gcolB)" stroke="#000" stroke-width="1.15" stroke-linejoin="round" />
<path d="M673.4 339.7 C674.5 338.5 677.4 337.5 679.3 336.7 C681.1 335.8 683.1 335.5 684.3 334.4 C685.4 333.4 685.5 330.4 686.2 330.3 C687.0 330.1 688.5 331.6 688.7 333.6 C689.0 335.6 688.7 340.0 687.6 342.5 C686.5 345.1 684.1 348.0 682.1 348.9 C680.0 349.9 676.7 348.9 675.1 348.1 C673.5 347.3 672.8 345.3 672.6 343.9 C672.3 342.5 672.3 340.9 673.4 339.7 Z" fill="url(#gblob)" stroke="#111" stroke-width="0.8" stroke-linejoin="round" />
<ellipse cx="718.6" cy="340.4" rx="9.0" ry="5.2" transform="rotate(-8 718.6 340.4)" fill="#9d9d9d" stroke="#000" stroke-width="1"/>
<g transform="translate(719.0 335.3) rotate(-5)"><ellipse rx="9.2" ry="6.4" fill="#10161c" stroke="#111" stroke-width=".7"/><path d="M-2.2 1.4 L-7.8 -2.0" stroke="#a9cfe6" stroke-width=".9"/><path d="M-1.7 0.8 L-6.2 -3.9" stroke="#a9cfe6" stroke-width=".9"/><path d="M-1.0 0.5 L-3.6 -5.2" stroke="#a9cfe6" stroke-width=".9"/><path d="M-0.2 0.3 L-0.6 -5.7" stroke="#a9cfe6" stroke-width=".9"/><path d="M0.7 0.4 L2.6 -5.5" stroke="#a9cfe6" stroke-width=".9"/><path d="M1.5 0.7 L5.3 -4.4" stroke="#a9cfe6" stroke-width=".9"/><path d="M2.0 1.2 L7.3 -2.7" stroke="#a9cfe6" stroke-width=".9"/></g>
<ellipse cx="759.5" cy="363.7" rx="4.6" ry="5.2" transform="rotate(-30 759.5 363.7)" fill="url(#ghole)" stroke="#000" stroke-width="1"/>
<ellipse cx="581.6" cy="347.6" rx="7.2" ry="3.9" transform="rotate(-36 581.6 347.6)" fill="url(#ghole)" stroke="#000" stroke-width="1"/>
<ellipse cx="556.2" cy="359.3" rx="6.8" ry="3.0" transform="rotate(-52 556.2 359.3)" fill="url(#ghole)" stroke="#000" stroke-width="1"/>
<ellipse cx="792.3" cy="384.4" rx="8.4" ry="7.2" transform="rotate(30 792.3 384.4)" fill="url(#ghole)" stroke="#000" stroke-width="1"/>
<ellipse cx="825.8" cy="406.7" rx="8.2" ry="8.0" transform="rotate(30 825.8 406.7)" fill="url(#ghole)" stroke="#000" stroke-width="1"/>
<path d="M859.3 392.8 C863.4 386.1 863.9 389.5 867.6 389.3 C871.3 389.0 876.9 389.4 881.6 391.4 C886.2 393.3 892.3 397.9 895.5 401.1 C898.8 404.4 900.6 407.8 901.1 410.9 C901.6 414.0 902.0 414.6 898.3 420.0 C894.6 425.3 888.1 441.4 878.8 443.0 C869.5 444.5 845.8 437.7 842.5 429.3 C839.3 420.9 855.1 399.4 859.3 392.8 Z" fill="url(#gcylC)" stroke="#000" stroke-width="1.15" stroke-linejoin="round" />
<ellipse cx="867.6" cy="420.7" rx="5.6" ry="7.4" transform="rotate(-30 867.6 420.7)" fill="#9a9a9a" stroke="#000" stroke-width="1"/>
<g transform="translate(874.9 425.1) rotate(-28)"><ellipse rx="6.4" ry="8.6" fill="#10161c" stroke="#111" stroke-width=".7"/><path d="M-1.5 1.8 L-5.4 -2.6" stroke="#a9cfe6" stroke-width=".9"/><path d="M-1.2 1.1 L-4.3 -5.2" stroke="#a9cfe6" stroke-width=".9"/><path d="M-0.7 0.6 L-2.5 -7.0" stroke="#a9cfe6" stroke-width=".9"/><path d="M-0.1 0.4 L-0.4 -7.7" stroke="#a9cfe6" stroke-width=".9"/><path d="M0.5 0.5 L1.8 -7.4" stroke="#a9cfe6" stroke-width=".9"/><path d="M1.0 0.9 L3.7 -5.9" stroke="#a9cfe6" stroke-width=".9"/><path d="M1.4 1.6 L5.1 -3.6" stroke="#a9cfe6" stroke-width=".9"/></g>
<path d="M888.5 426.2 L898.3 420.7 L892.7 470.9 L876.0 470.9 L873.2 455.5 Z" fill="#545454" stroke="#000" stroke-width="1.15" stroke-linejoin="round" />
<ellipse cx="880.2" cy="458.3" rx="5.4" ry="8.6" transform="rotate(-12 880.2 458.3)" fill="url(#ghole)" stroke="#000" stroke-width="1"/>
<path d="M888.7 424.8 L901.8 427.2 L919.7 437.9 L929.3 451.1 L929.8 465.4 L918.5 471.4 L917.3 491.7 L916.9 525.1 L905.4 525.1 L895.8 491.7 L893.4 477.3 Z" fill="url(#gcolD)" stroke="#000" stroke-width="1.15" stroke-linejoin="round" />
<path d="M893.4 479.7 C894.2 477.7 894.4 477.4 898.2 476.9 C902.0 476.3 912.7 475.5 916.1 476.4 C919.6 477.3 918.6 479.6 918.8 482.1 C919.0 484.7 918.6 489.5 917.3 491.7 C916.1 493.9 914.5 494.8 911.4 495.3 C908.2 495.7 901.2 495.5 898.2 494.5 C895.2 493.5 894.2 491.7 893.4 489.3 C892.6 486.8 892.6 481.8 893.4 479.7 Z" fill="url(#gcollar)" stroke="#111" stroke-width="0.8" stroke-linejoin="round" />
<path d="M919.2 471.4 C920.4 469.8 923.1 475.5 925.0 482.1 C926.9 488.7 930.7 500.4 930.7 510.8 C930.7 521.1 927.8 535.9 925.0 544.2 C922.2 552.6 915.1 564.1 913.8 560.9 C912.4 557.8 916.1 536.7 916.9 525.1 C917.6 513.6 917.9 500.6 918.3 491.7 C918.7 482.7 918.1 473.0 919.2 471.4 Z" fill="#585858" stroke="#000" stroke-width="1.15" stroke-linejoin="round" />
<ellipse cx="915.2" cy="541.8" rx="3.0" ry="7.2" transform="rotate(8 915.2 541.8)" fill="url(#ghole)" stroke="#000" stroke-width="1"/>
<path d="M603.9 342.5 C604.2 340.2 607.5 337.7 609.5 336.2 C611.5 334.8 613.7 335.4 615.8 333.9 C617.9 332.4 619.7 327.6 622.4 327.2 C625.0 326.8 628.5 329.4 631.8 331.4 C635.2 333.3 639.8 336.5 642.3 339.0 C644.8 341.5 648.6 344.5 646.9 346.4 C645.2 348.4 638.3 350.3 631.8 350.9 C625.4 351.5 612.8 351.6 608.1 350.2 C603.5 348.8 603.7 344.8 603.9 342.5 Z" fill="#f4b30b" stroke="#000" stroke-width="1.15" stroke-linejoin="round" />
<path d="M608.1 347.0 L646.5 346.0" fill="none" stroke="#000" stroke-width="1.15" stroke-linejoin="round" />
<path d="M726.0 362.7 L735.0 358.1 L744.8 361.4 L754.6 363.7 L761.3 369.7 L762.9 376.0 L767.8 382.3 L743.4 376.0 Z" fill="#f4b30b" stroke="#000" stroke-width="1.15" stroke-linejoin="round" />
<path d="M726.0 362.7 L735.0 358.1 L737.1 367.6 Z" fill="#c99209" stroke="#000" stroke-width="1.15" stroke-linejoin="round" />
<path d="M842.5 429.3 C841.8 426.5 846.7 427.5 849.5 427.4 C852.3 427.2 855.8 427.4 859.3 428.5 C862.7 429.6 867.2 431.7 870.4 433.9 C873.7 436.1 878.4 437.9 878.8 441.6 C879.1 445.3 876.7 455.8 872.5 456.2 C868.3 456.7 858.7 448.9 853.7 444.4 C848.7 439.9 843.2 432.1 842.5 429.3 Z" fill="#f4b30b" stroke="#000" stroke-width="1.15" stroke-linejoin="round" />
<path d="M514.4 374.9 C514.3 371.4 515.5 368.9 517.2 367.2 C518.9 365.5 521.7 364.5 524.9 364.4 C528.0 364.3 533.0 366.3 536.0 366.5 C539.1 366.7 540.7 365.2 543.0 365.8 C545.3 366.4 551.1 364.5 550.0 370.0 C548.8 375.5 539.4 388.9 536.0 398.6 C532.7 408.2 532.0 423.7 529.8 427.9 C527.5 432.1 522.4 427.9 522.8 423.7 C523.1 419.5 531.4 407.0 531.8 402.8 C532.3 398.6 527.9 401.0 525.6 398.6 C523.2 396.1 519.8 392.1 517.9 388.1 C516.0 384.2 514.5 378.4 514.4 374.9 Z" fill="#f4b30b" stroke="#000" stroke-width="1.15" stroke-linejoin="round" />
<path d="M514.8 380.5 L521.8 377.4 L534.9 384.9 L526.5 398.3 L518.6 388.8 Z" fill="#d9a00b" stroke="#000" stroke-width="1.15" stroke-linejoin="round" />
<path d="M526.5 371.4 C526.8 369.8 529.6 368.6 531.8 367.9 C534.1 367.2 537.2 366.9 540.2 367.2 C543.2 367.5 550.7 366.9 550.0 370.0 C549.3 373.1 539.3 384.8 536.0 386.0 C532.8 387.3 532.0 380.1 530.5 377.7 C528.9 375.2 526.3 373.0 526.5 371.4 Z" fill="#f4b30b" stroke="#000" stroke-width="1.15" stroke-linejoin="round" />
<path d="M515.8 368.6 C515.5 367.9 517.5 362.8 520.0 360.9 C522.4 359.1 527.3 357.7 530.5 357.4 C533.6 357.2 536.9 358.1 538.8 359.5 C540.7 360.9 543.1 365.2 541.9 365.8 C540.7 366.4 535.1 363.1 531.8 363.0 C528.5 362.9 524.8 364.2 522.1 365.1 C519.4 366.0 516.2 369.3 515.8 368.6 Z" fill="#1a1a1a" stroke="#111" stroke-width="0.6" stroke-linejoin="round" />
<path d="M518.6 365.8 C519.6 365.0 522.0 361.7 524.9 360.9 C527.8 360.1 534.2 360.9 536.0 360.9" fill="none" stroke="#cfd6dc" stroke-width="1" stroke-linejoin="round" />
<path d="M531.8 403.5 L522.8 423.7 L520.0 422.3 L525.6 405.6 Z" fill="#3f3f3f" stroke="none" stroke-width="0" stroke-linejoin="round" />
<path d="M895.8 520.3 C897.2 518.1 904.8 524.3 907.8 526.3 C910.8 528.3 913.2 527.7 913.8 532.3 C914.3 536.9 912.2 547.0 911.4 553.8 C910.6 560.5 910.2 567.1 909.0 572.9 C907.8 578.7 907.6 585.2 904.2 588.4 C900.8 591.6 889.7 596.2 888.7 592.0 C887.7 587.8 896.4 572.1 898.2 563.3 C900.0 554.6 899.8 546.6 899.4 539.4 C899.0 532.3 894.4 522.5 895.8 520.3 Z" fill="#f4b30b" stroke="#000" stroke-width="1.15" stroke-linejoin="round" />
<path d="M909.5 549.0 L911.6 550.2 L911.1 557.4 L909.2 556.6 Z" fill="#e8d44a" stroke="#111" stroke-width="0.5" stroke-linejoin="round" />
<ellipse cx="713.1" cy="495.7" rx="209.5" ry="126.0" transform="rotate(26.60 713.1 495.7)" fill="#f4b30b" stroke="#000" stroke-width="1.3"/>
<ellipse cx="712.7" cy="496.6" rx="198.5" ry="119.4" transform="rotate(26.60 712.7 496.6)" fill="url(#ginner)" stroke="#000" stroke-width="1.3"/>
<clipPath id="cpin"><ellipse cx="712.7" cy="496.6" rx="198.5" ry="119.4" transform="rotate(26.60 712.7 496.6)"/></clipPath>
<g clip-path="url(#cpin)">
<ellipse cx="655.7" cy="610.3" rx="210.0" ry="126.3" transform="rotate(26.60 655.7 610.3)" fill="#7a5700" stroke="#000" stroke-width="1.2"/>
<ellipse cx="656.8" cy="608.2" rx="202.0" ry="121.5" transform="rotate(26.60 656.8 608.2)" fill="#fff" stroke="#000" stroke-width="1.3"/>
</g>
<path d="M876.5 482 L829.5 604" fill="none" stroke="#0d0900" stroke-width="1.15"/>
<path d="M871.9 609.6 C872.5 611.6 879.5 610.8 883.4 610.4 C887.2 610.0 891.9 608.9 895.0 607.5 C898.1 606.1 900.2 604.3 902.0 602.0 C903.8 599.7 905.9 595.6 905.6 593.5 C905.3 591.4 902.6 589.6 900.0 589.4 C897.4 589.2 893.3 591.0 890.0 592.5 C886.7 594.0 883.0 595.8 880.0 598.6 C877.0 601.5 871.3 607.6 871.9 609.6 Z" fill="url(#gcolF)" stroke="#000" stroke-width="1.15" stroke-linejoin="round" />
</g>
<path d="M971.6 579.9 L968.9 584.7 L966.0 589.4 L962.7 593.8 L959.2 598.1 L955.4 602.3 L951.4 606.2 L947.1 610.0 L942.5 613.6 L937.6 617.0 L932.6 620.2 L927.2 623.2 L921.7 626.0 L915.9 628.6 L909.9 631.0 L903.6 633.2 L897.2 635.2 L890.5 636.9 L883.7 638.5 L876.7 639.8 L869.5 640.8 L862.1 641.7 L854.6 642.3 L846.9 642.7 L839.1 642.9 L831.2 642.9 L823.1 642.6 L815.0 642.1 L806.7 641.4 L798.4 640.4 L789.9 639.3 L781.4 637.9 L772.9 636.3 L764.3 634.4 L755.6 632.4 L746.9 630.1 L738.2 627.6 L729.5 625.0 L720.8 622.1 L712.2 619.0 L703.5 615.7 L694.9 612.2 L686.3 608.5 L677.8 604.7 L669.3 600.7 L661.0 596.5 L652.7 592.1 L644.5 587.5 L636.4 582.8 L628.5 578.0 L620.6 573.0 L612.9 567.8 L605.4 562.5 L598.0 557.1 L590.7 551.6 L583.7 546.0 L576.8 540.2 L570.1 534.3 L563.6 528.4 L557.3 522.4 L551.3 516.2 L545.4 510.1 L539.8 503.8 L534.4 497.5 L529.3 491.1 L524.4 484.7 L519.7 478.3 L515.4 471.8 L511.3 465.3 L507.4 458.9 L503.8 452.4 L500.5 445.9 L497.5 439.4 L494.8 432.9 L492.4 426.5 L490.2 420.1 L488.4 413.8 L486.9 407.5 L485.6 401.3 L484.7 395.1 L484.0 389.0 L483.7 383.0 L483.7 377.1 L483.9 371.3 L484.5 365.6 L485.4 360.0 L486.6 354.5 L488.0 349.1 L489.8 343.9 L491.9 338.8 L494.2 333.9 L496.9 329.1 L499.8 324.4 L503.1 320.0 L506.6 315.7 L510.4 311.5 L514.4 307.6 L518.7 303.8 L523.3 300.2 L528.2 296.8 L533.2 293.6 L538.6 290.6 L544.1 287.8 L549.9 285.2 L555.9 282.8 L562.2 280.6 L568.6 278.6 L575.3 276.9 L582.1 275.3 L589.1 274.0 L596.3 273.0 L603.7 272.1 L611.2 271.5 L618.9 271.1 L626.7 270.9 L634.6 270.9 L642.7 271.2 L650.8 271.7 L659.1 272.4 L667.4 273.4 L675.9 274.5 L684.4 275.9 L692.9 277.5 L701.5 279.4 L710.2 281.4 L718.9 283.7 L727.6 286.2 L736.3 288.8 L745.0 291.7 L753.6 294.8 L762.3 298.1 L770.9 301.6 L779.5 305.3 L788.0 309.1 L796.5 313.1 L804.8 317.3 L813.1 321.7 L821.3 326.3 L829.4 331.0 L837.3 335.8 L845.2 340.8 L852.9 346.0 L860.4 351.3 L867.8 356.7 L875.1 362.2 L882.1 367.8 L889.0 373.6 L895.7 379.5 L902.2 385.4 L908.5 391.4 L914.5 397.6 L920.4 403.7 L926.0 410.0 L931.4 416.3 L936.5 422.7 L941.4 429.1 L946.1 435.5 L950.4 442.0 L954.5 448.5 L958.4 454.9 L962.0 461.4 L965.3 467.9 L968.3 474.4 L971.0 480.9 L973.4 487.3 L975.6 493.7 L977.4 500.0 L978.9 506.3 L980.2 512.5 L981.1 518.7 L981.8 524.8 L982.1 530.8 L982.1 536.7 L981.9 542.5 L981.3 548.2 L980.4 553.8 L979.2 559.3 L977.8 564.7 L976.0 569.9 L973.9 575.0 Z M922.0 554.4 L921.7 554.9 L921.4 555.4 L921.2 555.9 L920.9 556.4 L920.7 556.8 L920.4 557.3 L920.1 557.8 L919.8 558.3 L919.6 558.8 L919.3 559.3 L919.0 559.8 L918.7 560.2 L918.4 560.7 L918.1 561.2 L917.8 561.7 L917.5 562.1 L917.2 562.6 L916.9 563.1 L916.6 563.5 L916.2 564.0 L915.9 564.5 L915.6 564.9 L915.2 565.4 L923.1 570.6 L925.4 572.6 L926.9 574.2 L928.0 575.6 L928.9 576.8 L929.7 577.9 L930.2 579.0 L930.7 580.0 L931.1 581.0 L931.4 581.9 L931.6 582.8 L931.8 583.6 L931.9 584.4 L931.9 585.2 L931.9 585.9 L931.8 586.6 L931.7 587.3 L931.5 587.9 L931.3 588.6 L931.1 589.2 L930.8 589.7 L930.4 590.3 L930.1 590.8 L929.7 591.3 L929.2 591.8 L928.7 592.2 L928.2 592.6 L927.6 593.0 L927.0 593.4 L926.3 593.7 L925.7 594.0 L924.9 594.3 L924.2 594.6 L923.4 594.8 L922.5 595.0 L921.6 595.1 L920.7 595.2 L919.7 595.3 L918.6 595.3 L917.5 595.3 L916.3 595.2 L915.1 595.1 L913.8 594.9 L912.4 594.6 L910.8 594.2 L909.2 593.7 L907.3 593.1 L905.1 592.2 L902.2 590.8 L901.8 591.2 L902.1 592.2 L902.3 593.1 L902.4 594.0 L902.5 594.9 L902.6 595.7 L902.6 596.5 L902.6 597.3 L902.6 598.1 L902.5 598.9 L902.4 599.6 L902.3 600.3 L902.2 601.0 L902.0 601.7 L901.8 602.3 L901.5 603.0 L901.2 603.6 L901.0 604.2 L900.6 604.8 L900.3 605.3 L899.9 605.9 L899.6 606.4 L899.1 606.9 L898.7 607.4 L898.3 607.9 L897.8 608.4 L897.3 608.8 L896.8 609.2 L896.3 609.6 L895.7 610.0 L895.1 610.4 L894.6 610.8 L893.9 611.1 L893.3 611.5 L892.7 611.8 L892.0 612.1 L891.3 612.3 L890.6 612.6 L889.9 612.8 L889.2 613.1 L888.4 613.3 L887.7 613.5 L886.9 613.6 L886.1 613.8 L885.3 613.9 L884.4 614.1 L883.6 614.2 L882.7 614.2 L881.9 614.3 L881.0 614.4 L880.0 614.4 L879.1 614.4 L878.2 614.4 L877.2 614.3 L876.2 614.3 L875.2 614.2 L874.2 614.1 L873.2 614.0 L872.1 613.8 L871.1 613.7 L870.0 613.5 L868.9 613.2 L867.8 613.0 L866.6 612.7 L865.5 612.4 L864.3 612.1 L863.1 611.7 L861.9 611.3 L860.6 610.9 L859.4 610.4 L858.1 609.9 L856.7 609.3 L855.4 608.7 L854.0 608.1 L852.5 607.4 L851.1 606.6 L849.5 605.7 L848.0 604.7 L846.3 603.7 L844.5 602.5 L842.6 601.1 L841.6 600.8 L841.0 601.0 L840.3 601.1 L839.6 601.2 L838.9 601.3 L838.2 601.5 L837.5 601.6 L836.7 601.7 L836.0 601.8 L835.3 601.9 L834.6 602.0 L833.9 602.1 L833.2 602.2 L832.5 602.3 L831.7 602.4 L831.0 602.5 L830.3 602.5 L829.6 602.6 L828.8 602.7 L828.1 602.8 L827.4 602.9 L826.6 602.9 L825.9 603.0 L825.2 603.1 L824.4 603.1 L823.7 603.2 L823.0 603.3 L822.2 603.3 L821.5 603.4 L820.7 603.4 L820.0 603.5 L819.2 603.5 L818.5 603.6 L817.7 603.6 L817.0 603.6 L816.2 603.7 L815.4 603.7 L814.7 603.7 L813.9 603.8 L813.2 603.8 L812.4 603.8 L811.6 603.8 L810.9 603.8 L810.1 603.8 L809.3 603.9 L808.5 603.9 L807.8 603.9 L807.0 603.9 L806.2 603.9 L805.4 603.9 L804.7 603.9 L803.9 603.8 L803.1 603.8 L802.3 603.8 L801.5 603.8 L800.7 603.8 L799.9 603.7 L799.2 603.7 L798.4 603.7 L797.6 603.7 L796.8 603.6 L796.0 603.6 L795.2 603.5 L794.4 603.5 L793.6 603.5 L792.8 603.4 L792.0 603.4 L791.2 603.3 L790.4 603.2 L789.6 603.2 L788.8 603.1 L788.0 603.1 L787.2 603.0 L786.4 602.9 L785.6 602.9 L784.7 602.8 L783.9 602.7 L783.1 602.6 L782.3 602.5 L781.5 602.4 L780.7 602.4 L779.9 602.3 L779.0 602.2 L778.2 602.1 L777.4 602.0 L776.6 601.9 L775.8 601.8 L774.9 601.7 L774.1 601.5 L773.3 601.4 L772.5 601.3 L771.6 601.2 L770.8 601.1 L770.0 600.9 L769.2 600.8 L768.3 600.7 L767.5 600.6 L766.7 600.4 L765.9 600.3 L765.0 600.1 L764.2 600.0 L763.4 599.8 L762.5 599.7 L761.7 599.5 L760.9 599.4 L760.0 599.2 L759.2 599.1 L758.4 598.9 L757.5 598.7 L756.7 598.6 L755.9 598.4 L755.0 598.2 L754.2 598.1 L753.3 597.9 L752.5 597.7 L751.7 597.5 L750.8 597.3 L750.0 597.1 L749.1 596.9 L748.3 596.8 L747.5 596.6 L746.6 596.4 L745.8 596.2 L744.9 595.9 L744.1 595.7 L743.3 595.5 L742.4 595.3 L741.6 595.1 L740.7 594.9 L739.9 594.7 L739.0 594.4 L738.2 594.2 L737.4 594.0 L736.5 593.8 L735.7 593.5 L734.8 593.3 L734.0 593.1 L733.1 592.8 L732.3 592.6 L731.5 592.3 L730.6 592.1 L729.8 591.8 L728.9 591.6 L728.1 591.3 L727.2 591.1 L726.4 590.8 L725.6 590.5 L724.7 590.3 L723.9 590.0 L723.0 589.7 L722.2 589.4 L721.3 589.2 L720.5 588.9 L719.7 588.6 L718.8 588.3 L718.0 588.0 L717.1 587.8 L715.6 593.5 L714.5 594.9 L713.4 595.8 L712.4 596.5 L711.4 597.1 L710.3 597.5 L709.3 597.8 L708.3 598.0 L707.3 598.2 L706.3 598.3 L705.3 598.4 L704.3 598.4 L703.3 598.4 L702.3 598.3 L701.3 598.2 L700.3 598.1 L699.3 597.9 L698.3 597.7 L697.3 597.5 L696.4 597.2 L695.4 597.0 L694.5 596.6 L693.5 596.3 L692.6 595.9 L691.6 595.5 L690.7 595.1 L689.8 594.6 L688.9 594.1 L688.0 593.6 L687.1 593.1 L686.2 592.5 L685.4 591.9 L684.5 591.2 L683.7 590.6 L682.9 589.9 L682.1 589.2 L681.3 588.4 L680.5 587.6 L679.8 586.7 L679.1 585.8 L678.4 584.9 L677.8 583.9 L677.2 582.8 L676.6 581.6 L676.2 580.3 L675.8 578.7 L675.7 576.8 L676.2 573.5 L675.1 573.7 L674.0 573.9 L672.9 574.0 L671.8 574.1 L670.7 574.1 L669.6 574.2 L668.5 574.1 L667.4 574.1 L666.4 574.1 L665.3 574.0 L664.3 573.9 L663.2 573.7 L662.2 573.6 L661.2 573.4 L660.1 573.2 L659.1 573.0 L658.1 572.8 L657.1 572.6 L656.1 572.3 L655.1 572.0 L654.1 571.7 L653.1 571.4 L652.2 571.1 L651.2 570.8 L650.3 570.4 L649.3 570.0 L648.4 569.7 L647.4 569.3 L646.5 568.9 L645.6 568.4 L644.7 568.0 L643.8 567.5 L642.9 567.1 L642.0 566.6 L641.1 566.1 L640.3 565.6 L639.4 565.1 L638.6 564.6 L637.7 564.1 L636.9 563.5 L636.1 563.0 L635.3 562.4 L634.5 561.8 L633.7 561.2 L632.9 560.7 L632.2 560.0 L631.4 559.4 L630.7 558.8 L630.0 558.2 L629.3 557.5 L628.6 556.8 L627.9 556.2 L627.2 555.5 L626.6 554.8 L626.0 554.1 L625.3 553.4 L624.7 552.7 L624.2 551.9 L623.6 551.2 L623.0 550.4 L622.5 549.7 L622.0 548.9 L621.5 548.1 L621.0 547.3 L620.6 546.5 L620.2 545.7 L619.8 544.9 L619.4 544.0 L619.0 543.2 L618.7 542.3 L618.4 541.4 L618.2 540.5 L617.9 539.6 L617.8 538.7 L617.6 537.8 L617.5 536.8 L617.4 535.8 L617.4 534.8 L617.5 533.8 L617.2 533.0 L616.5 532.5 L615.8 531.9 L615.1 531.4 L614.5 530.8 L613.8 530.3 L613.1 529.7 L612.5 529.2 L611.8 528.6 L611.1 528.1 L610.5 527.5 L609.8 526.9 L609.2 526.4 L608.5 525.8 L607.9 525.3 L607.2 524.7 L606.6 524.1 L605.9 523.6 L605.3 523.0 L604.6 522.4 L604.0 521.9 L603.4 521.3 L602.8 520.7 L602.1 520.2 L601.5 519.6 L600.9 519.0 L600.3 518.4 L599.6 517.9 L599.0 517.3 L598.4 516.7 L597.8 516.1 L597.2 515.5 L596.6 515.0 L596.0 514.4 L595.4 513.8 L594.8 513.2 L594.2 512.6 L593.6 512.0 L593.0 511.4 L592.4 510.8 L591.8 510.3 L591.3 509.7 L590.7 509.1 L590.1 508.5 L589.5 507.9 L589.0 507.3 L588.4 506.7 L587.8 506.1 L587.3 505.5 L586.7 504.9 L586.1 504.3 L585.6 503.7 L585.0 503.1 L584.5 502.5 L583.9 501.9 L583.4 501.3 L582.9 500.7 L582.3 500.1 L581.8 499.5 L581.2 498.9 L580.7 498.3 L580.2 497.6 L579.7 497.0 L579.1 496.4 L578.6 495.8 L578.1 495.2 L577.6 494.6 L577.1 494.0 L576.6 493.4 L576.1 492.7 L575.6 492.1 L575.1 491.5 L574.6 490.9 L574.1 490.3 L573.6 489.7 L573.1 489.0 L572.6 488.4 L572.2 487.8 L571.7 487.2 L571.2 486.6 L570.7 486.0 L570.3 485.3 L569.8 484.7 L569.4 484.1 L568.9 483.5 L568.4 482.8 L568.0 482.2 L567.5 481.6 L567.1 481.0 L566.7 480.3 L566.2 479.7 L565.8 479.1 L565.4 478.5 L564.9 477.8 L564.5 477.2 L564.1 476.6 L563.7 476.0 L563.2 475.3 L562.8 474.7 L562.4 474.1 L562.0 473.4 L561.6 472.8 L561.2 472.2 L560.8 471.6 L560.4 470.9 L560.0 470.3 L559.6 469.7 L559.2 469.0 L558.9 468.4 L558.5 467.8 L558.1 467.1 L557.7 466.5 L557.4 465.9 L557.0 465.2 L556.6 464.6 L556.3 464.0 L555.9 463.4 L555.6 462.7 L555.2 462.1 L554.9 461.5 L554.5 460.8 L554.2 460.2 L553.9 459.6 L553.5 458.9 L553.2 458.3 L552.9 457.7 L552.6 457.0 L552.3 456.4 L551.9 455.8 L551.6 455.1 L551.3 454.5 L551.0 453.9 L550.7 453.2 L550.4 452.6 L550.1 452.0 L549.8 451.3 L549.6 450.7 L549.3 450.1 L549.0 449.5 L548.7 448.8 L548.4 448.2 L548.2 447.6 L547.9 446.9 L547.6 446.3 L547.4 445.7 L547.1 445.0 L546.9 444.4 L546.6 443.8 L546.4 443.2 L546.1 442.5 L545.9 441.9 L545.7 441.3 L545.4 440.6 L545.2 440.0 L545.0 439.4 L544.8 438.8 L544.6 438.1 L544.3 437.5 L544.1 436.9 L543.9 436.3 L543.7 435.6 L543.5 435.0 L529.2 432.5 L526.2 431.5 L524.1 430.6 L522.2 429.7 L520.7 428.8 L519.3 427.9 L518.1 427.0 L516.9 426.2 L515.9 425.4 L515.0 424.6 L514.1 423.7 L513.3 422.9 L512.6 422.1 L511.9 421.3 L511.3 420.5 L510.7 419.8 L510.2 419.0 L509.7 418.2 L509.3 417.5 L508.9 416.7 L508.6 416.0 L508.3 415.2 L508.1 414.5 L507.9 413.8 L507.8 413.0 L507.7 412.3 L507.6 411.6 L507.6 411.0 L507.6 410.3 L507.7 409.6 L507.8 409.0 L508.0 408.3 L508.2 407.7 L508.5 407.1 L508.8 406.5 L509.2 405.9 L509.6 405.3 L510.1 404.8 L510.7 404.2 L511.3 403.7 L512.0 403.3 L512.8 402.8 L513.8 402.4 L514.8 402.0 L515.9 401.7 L517.3 401.4 L518.9 401.2 L520.9 401.1 L523.7 401.2 L523.6 400.5 L522.6 399.7 L521.7 398.8 L520.9 397.9 L520.1 397.0 L519.3 396.2 L518.6 395.3 L517.9 394.4 L517.2 393.6 L516.6 392.8 L516.1 392.0 L515.5 391.1 L515.0 390.3 L514.6 389.5 L514.1 388.7 L513.7 387.9 L513.3 387.2 L513.0 386.4 L512.7 385.6 L512.4 384.9 L512.1 384.1 L511.9 383.4 L511.7 382.6 L511.5 381.9 L511.3 381.2 L511.2 380.5 L511.1 379.8 L511.0 379.1 L511.0 378.4 L510.9 377.7 L510.9 377.0 L511.0 376.3 L511.0 375.7 L511.1 375.0 L511.2 374.4 L511.3 373.8 L511.4 373.2 L511.6 372.5 L511.8 371.9 L512.0 371.3 L512.2 370.8 L512.5 370.2 L512.8 369.6 L513.1 369.1 L513.4 368.6 L513.8 368.0 L514.2 367.5 L514.6 367.0 L515.1 366.5 L515.5 366.0 L516.0 365.6 L516.5 365.1 L517.1 364.7 L517.6 364.3 L518.2 363.9 L518.9 363.5 L519.5 363.1 L520.2 362.7 L520.9 362.4 L521.6 362.1 L522.4 361.7 L523.2 361.5 L524.1 361.2 L524.9 360.9 L525.8 360.7 L526.8 360.5 L527.8 360.3 L528.8 360.1 L529.8 360.0 L531.0 359.9 L532.1 359.8 L533.3 359.8 L534.6 359.8 L536.0 359.8 L537.4 359.9 L538.9 360.0 L540.5 360.2 L542.2 360.4 L542.9 360.2 L543.2 359.7 L543.4 359.2 L543.7 358.7 L544.0 358.2 L544.3 357.8 L544.6 357.3 L544.9 356.8 L545.2 356.3 L545.5 355.9 L545.8 355.4 L546.1 354.9 L546.4 354.5 L546.8 354.0 L547.1 353.5 L547.4 353.1 L547.8 352.6 L548.1 352.2 L548.4 351.7 L548.8 351.3 L549.1 350.8 L549.5 350.4 L549.8 349.9 L550.2 349.5 L550.5 349.1 L550.9 348.6 L551.2 348.2 L551.6 347.7 L552.0 347.3 L552.4 346.9 L552.7 346.5 L553.1 346.0 L553.5 345.6 L553.9 345.2 L554.3 344.8 L554.7 344.3 L555.1 343.9 L555.5 343.5 L555.9 343.1 L556.3 342.7 L556.7 342.3 L557.1 341.9 L557.6 341.5 L558.0 341.1 L558.4 340.7 L558.8 340.3 L559.3 339.9 L559.7 339.5 L560.1 339.1 L560.6 338.7 L561.0 338.4 L561.5 338.0 L561.9 337.6 L562.4 337.2 L562.8 336.9 L563.3 336.5 L563.8 336.1 L564.2 335.7 L564.7 335.4 L565.2 335.0 L565.7 334.7 L566.1 334.3 L566.6 333.9 L567.1 333.6 L567.6 333.2 L568.1 332.9 L568.6 332.5 L569.1 332.2 L569.6 331.9 L570.1 331.5 L570.6 331.2 L571.1 330.9 L571.6 330.5 L572.2 330.2 L572.7 329.9 L573.2 329.5 L573.7 329.2 L574.3 328.9 L574.8 328.6 L575.3 328.3 L575.9 328.0 L576.4 327.7 L576.9 327.4 L577.5 327.0 L578.0 326.7 L578.6 326.4 L579.2 326.2 L579.7 325.9 L580.3 325.6 L580.8 325.3 L581.4 325.0 L582.0 324.7 L582.6 324.4 L583.1 324.1 L583.7 323.9 L584.3 323.6 L584.9 323.3 L585.5 323.1 L586.1 322.8 L586.7 322.5 L587.2 322.3 L587.8 322.0 L588.4 321.8 L589.1 321.5 L589.7 321.3 L590.3 321.0 L590.9 320.8 L591.5 320.5 L592.1 320.3 L592.7 320.0 L593.4 319.8 L594.0 319.6 L594.6 319.4 L595.2 319.1 L595.9 318.9 L596.5 318.7 L597.2 318.5 L597.8 318.2 L598.4 318.0 L599.1 317.8 L599.7 317.6 L600.4 317.4 L601.0 317.2 L601.7 317.0 L602.4 316.8 L603.0 316.6 L603.7 316.4 L604.3 316.2 L605.0 316.1 L605.7 315.9 L606.4 315.7 L607.0 315.5 L607.7 315.3 L608.4 315.2 L609.1 315.0 L609.8 314.8 L610.4 314.7 L611.1 314.5 L611.8 314.3 L612.5 314.2 L613.2 314.0 L613.9 313.9 L614.6 313.7 L615.3 313.6 L616.0 313.5 L616.7 313.3 L617.4 313.2 L618.2 313.0 L618.9 312.9 L619.6 312.8 L620.3 312.7 L621.0 312.5 L621.8 312.4 L622.5 312.3 L623.2 312.2 L623.9 312.1 L624.7 312.0 L625.4 311.9 L626.1 311.8 L626.9 311.7 L627.6 311.6 L623.7 304.9 L623.0 302.7 L622.8 301.1 L622.8 299.7 L622.9 298.6 L623.1 297.6 L623.4 296.8 L623.7 296.0 L624.1 295.2 L624.6 294.6 L625.1 294.0 L625.7 293.5 L626.2 293.0 L626.9 292.5 L627.5 292.1 L628.2 291.8 L628.9 291.4 L629.6 291.1 L630.4 290.9 L631.1 290.7 L631.9 290.5 L632.8 290.4 L633.6 290.2 L634.5 290.2 L635.3 290.1 L636.2 290.1 L637.2 290.1 L638.1 290.2 L639.1 290.3 L640.0 290.4 L641.0 290.6 L642.0 290.7 L643.0 291.0 L644.1 291.2 L645.1 291.5 L646.2 291.9 L647.3 292.3 L648.4 292.7 L649.5 293.2 L650.7 293.8 L651.9 294.4 L653.1 295.0 L654.3 295.8 L655.6 296.6 L656.9 297.5 L658.2 298.6 L659.7 299.9 L661.2 301.4 L663.0 303.6 L663.8 303.5 L664.4 302.9 L665.0 302.3 L665.6 301.7 L666.2 301.1 L666.8 300.6 L667.5 300.2 L668.2 299.7 L668.9 299.3 L669.6 298.9 L670.3 298.5 L671.1 298.2 L671.8 297.9 L672.6 297.6 L673.4 297.3 L674.2 297.1 L675.0 296.9 L675.8 296.7 L676.7 296.5 L677.5 296.4 L678.3 296.2 L679.2 296.1 L680.1 296.0 L680.9 296.0 L681.8 295.9 L682.7 295.9 L683.6 295.9 L684.5 295.9 L685.4 295.9 L686.4 295.9 L687.3 296.0 L688.2 296.1 L689.2 296.2 L690.1 296.3 L691.0 296.4 L692.0 296.6 L693.0 296.7 L693.9 296.9 L694.9 297.1 L695.8 297.4 L696.8 297.6 L697.8 297.9 L698.8 298.1 L699.8 298.4 L700.7 298.7 L701.7 299.1 L702.7 299.4 L703.7 299.8 L704.7 300.2 L705.7 300.6 L706.7 301.0 L707.6 301.4 L708.6 301.9 L709.6 302.4 L710.6 302.9 L711.6 303.4 L712.6 303.9 L713.6 304.5 L714.6 305.1 L715.5 305.7 L716.5 306.3 L717.5 307.0 L718.5 307.6 L719.4 308.3 L720.4 309.1 L721.4 309.8 L722.3 310.6 L723.3 311.4 L724.2 312.2 L725.2 313.1 L726.1 314.0 L727.0 315.0 L728.0 316.0 L728.9 317.0 L729.8 318.1 L730.7 319.2 L731.5 320.5 L732.4 321.7 L733.3 322.3 L734.1 322.6 L735.0 322.9 L735.9 323.1 L736.8 323.4 L737.6 323.7 L738.5 323.9 L739.4 324.2 L740.2 324.5 L741.1 324.8 L742.0 325.1 L742.8 325.3 L743.7 325.6 L744.6 325.9 L745.4 326.2 L746.3 326.5 L747.2 326.8 L748.0 327.1 L748.9 327.4 L749.7 327.7 L750.6 328.0 L751.5 328.3 L752.3 328.7 L753.2 329.0 L754.1 329.3 L754.9 329.6 L755.8 329.9 L756.6 330.3 L757.5 330.6 L758.4 330.9 L759.2 331.3 L760.1 331.6 L760.9 331.9 L761.8 332.3 L762.7 332.6 L763.5 333.0 L764.4 333.3 L765.2 333.7 L766.1 334.0 L766.9 334.4 L767.8 334.7 L768.6 335.1 L769.5 335.5 L770.3 335.8 L771.2 336.2 L772.0 336.6 L772.9 336.9 L773.7 337.3 L774.6 337.7 L775.4 338.1 L776.3 338.4 L777.1 338.8 L778.0 339.2 L778.8 339.6 L779.7 340.0 L780.5 340.4 L781.3 340.8 L782.2 341.2 L783.0 341.6 L783.9 342.0 L784.7 342.4 L785.5 342.8 L786.4 343.2 L787.2 343.6 L788.0 344.0 L788.9 344.4 L789.7 344.9 L790.5 345.3 L791.4 345.7 L792.2 346.1 L793.0 346.5 L793.8 347.0 L794.7 347.4 L795.5 347.8 L796.3 348.3 L797.1 348.7 L797.9 349.1 L798.8 349.6 L799.6 350.0 L800.4 350.5 L801.2 350.9 L802.0 351.4 L802.8 351.8 L803.6 352.3 L804.4 352.7 L805.2 353.2 L806.1 353.6 L806.9 354.1 L807.7 354.6 L808.5 355.0 L809.3 355.5 L810.1 356.0 L810.9 356.4 L811.6 356.9 L812.4 357.4 L813.2 357.9 L814.0 358.3 L814.8 358.8 L815.6 359.3 L816.4 359.8 L817.2 360.3 L818.0 360.8 L818.7 361.3 L819.5 361.8 L820.3 362.2 L821.1 362.7 L821.8 363.2 L822.6 363.7 L823.4 364.2 L824.2 364.7 L824.9 365.2 L825.7 365.8 L826.4 366.3 L827.2 366.8 L828.0 367.3 L828.7 367.8 L829.5 368.3 L830.2 368.8 L831.0 369.4 L831.7 369.9 L832.5 370.4 L833.2 370.9 L834.0 371.4 L834.7 372.0 L835.5 372.5 L836.2 373.0 L836.9 373.6 L837.7 374.1 L838.4 374.6 L839.1 375.2 L839.9 375.7 L840.6 376.2 L841.3 376.8 L842.0 377.3 L842.8 377.9 L843.5 378.4 L844.2 379.0 L844.9 379.5 L845.6 380.1 L846.3 380.6 L847.0 381.2 L847.7 381.7 L848.5 382.3 L849.2 382.8 L849.9 383.4 L850.5 384.0 L851.2 384.5 L851.9 385.1 L852.6 385.7 L853.3 386.2 L854.0 386.8 L854.7 387.4 L855.4 387.9 L856.0 388.5 L856.7 389.1 L857.4 389.7 L858.1 390.2 L858.7 390.8 L859.4 391.4 L860.1 392.0 L860.7 392.6 L867.2 390.2 L869.7 389.9 L871.8 389.8 L873.6 389.9 L875.2 390.1 L876.7 390.4 L878.1 390.7 L879.5 391.0 L880.7 391.4 L882.0 391.8 L883.2 392.3 L884.3 392.8 L885.4 393.3 L886.4 393.8 L887.5 394.3 L888.4 394.9 L889.4 395.5 L890.3 396.0 L891.2 396.7 L892.0 397.3 L892.8 397.9 L893.6 398.6 L894.4 399.2 L895.1 399.9 L895.8 400.6 L896.5 401.3 L897.1 402.0 L897.7 402.7 L898.2 403.4 L898.8 404.2 L899.2 404.9 L899.7 405.7 L900.1 406.5 L900.5 407.2 L900.8 408.0 L901.1 408.8 L901.3 409.6 L901.5 410.5 L901.7 411.3 L901.7 412.1 L901.8 413.0 L901.7 413.8 L901.5 414.7 L901.3 415.6 L900.9 416.6 L900.4 417.5 L899.7 418.5 L898.6 419.5 L897.0 420.7 L897.6 421.4 L898.9 421.9 L900.2 422.4 L901.4 422.9 L902.6 423.4 L903.8 424.0 L904.9 424.5 L906.0 425.1 L907.1 425.7 L908.1 426.3 L909.1 426.9 L910.1 427.5 L911.1 428.1 L912.0 428.7 L913.0 429.4 L913.9 430.0 L914.7 430.7 L915.6 431.3 L916.4 432.0 L917.2 432.6 L918.0 433.3 L918.8 434.0 L919.5 434.7 L920.3 435.3 L921.0 436.0 L921.6 436.7 L922.3 437.4 L922.9 438.1 L923.6 438.8 L924.2 439.5 L924.7 440.2 L925.3 441.0 L925.8 441.7 L926.3 442.4 L926.8 443.1 L927.3 443.8 L927.8 444.6 L928.2 445.3 L928.6 446.0 L929.0 446.7 L929.3 447.5 L929.7 448.2 L930.0 448.9 L930.3 449.7 L930.5 450.4 L930.8 451.1 L931.0 451.9 L931.2 452.6 L931.4 453.3 L931.5 454.0 L931.6 454.8 L931.7 455.5 L931.8 456.2 L931.8 456.9 L931.9 457.7 L931.8 458.4 L931.8 459.1 L931.7 459.8 L931.6 460.5 L931.5 461.2 L931.3 461.9 L931.1 462.6 L930.9 463.3 L930.6 464.0 L930.3 464.6 L930.0 465.3 L929.6 466.0 L929.1 466.7 L928.7 467.3 L928.1 468.0 L927.5 468.6 L926.9 469.2 L926.2 469.8 L925.4 470.4 L924.6 471.0 L923.6 471.6 L922.6 472.2 L921.4 472.7 L921.2 473.4 L921.5 474.0 L921.7 474.7 L922.0 475.3 L922.2 475.9 L922.5 476.6 L922.7 477.2 L923.0 477.9 L923.2 478.5 L923.4 479.2 L923.6 479.8 L923.9 480.5 L924.1 481.1 L924.3 481.7 L924.5 482.4 L924.7 483.0 L924.9 483.7 L925.1 484.3 L925.3 485.0 L925.5 485.6 L925.7 486.2 L925.9 486.9 L926.1 487.5 L926.2 488.2 L926.4 488.8 L926.6 489.4 L926.8 490.1 L926.9 490.7 L927.1 491.3 L927.2 492.0 L927.4 492.6 L927.5 493.2 L927.7 493.9 L927.8 494.5 L928.0 495.1 L928.1 495.8 L928.2 496.4 L928.4 497.0 L928.5 497.7 L928.6 498.3 L928.7 498.9 L928.8 499.5 L928.9 500.2 L929.0 500.8 L929.1 501.4 L929.2 502.0 L929.3 502.7 L929.4 503.3 L929.5 503.9 L929.6 504.5 L929.7 505.1 L929.7 505.8 L929.8 506.4 L929.9 507.0 L929.9 507.6 L930.0 508.2 L930.0 508.8 L930.1 509.4 L930.1 510.1 L930.2 510.7 L930.2 511.3 L930.3 511.9 L930.3 512.5 L930.3 513.1 L930.3 513.7 L930.4 514.3 L930.4 514.9 L930.4 515.5 L930.4 516.1 L930.4 516.7 L930.4 517.3 L930.4 517.9 L930.4 518.5 L930.4 519.1 L930.4 519.7 L930.4 520.3 L930.3 520.9 L930.3 521.5 L930.3 522.1 L930.3 522.7 L930.2 523.2 L930.2 523.8 L930.1 524.4 L930.1 525.0 L930.0 525.6 L930.0 526.2 L929.9 526.7 L929.9 527.3 L929.8 527.9 L929.7 528.5 L929.6 529.0 L929.6 529.6 L929.5 530.2 L929.4 530.8 L929.3 531.3 L929.2 531.9 L929.1 532.5 L929.0 533.0 L928.9 533.6 L928.8 534.2 L928.7 534.7 L928.6 535.3 L928.5 535.8 L928.3 536.4 L928.2 536.9 L928.1 537.5 L928.0 538.1 L927.8 538.6 L927.7 539.2 L927.5 539.7 L927.4 540.2 L927.2 540.8 L927.1 541.3 L926.9 541.9 L926.7 542.4 L926.6 543.0 L926.4 543.5 L926.2 544.0 L926.1 544.6 L925.9 545.1 L925.7 545.6 L925.5 546.1 L925.3 546.7 L925.1 547.2 L924.9 547.7 L924.7 548.2 L924.5 548.8 L924.3 549.3 L924.1 549.8 L923.8 550.3 L923.6 550.8 L923.4 551.3 L923.2 551.9 L922.9 552.4 L922.7 552.9 L922.4 553.4 L922.2 553.9 Z" fill="url(#gplate)" fill-rule="evenodd" stroke="#000" stroke-width="1.35" stroke-linejoin="round"/>
</svg>

<svg class="abs" style="left:1255px;top:200px" width="135" height="130" viewBox="1255 200 135 130">
  <g fill="#fff" stroke="#dfe6ee" stroke-width="4.6" stroke-linejoin="round">
    <path d="M1319.8 259.8 L1293.9 224.9 L1336.7 221.4 L1364.4 258.0 Z"/>
    <path d="M1313.3 263.7 L1288.7 230.0 L1271.4 265.0 L1294.7 303.6 Z"/>
    <path d="M1322.9 269.4 L1367.0 264.5 L1348.8 301.8 L1304.0 307.0 Z"/>
  </g>
  <g stroke="#fff" stroke-width="1.5" fill="none">
    <path d="M1335.1 218.1 L1340.9 224.6 M1267.8 261.9 L1274.2 268.6 M1342.9 301.0 L1350.6 307.5 M1363.6 254.4 L1370.1 260.9"/>
  </g>
  <path d="M1318.9 265.4 L1287.8 216.8" stroke="#cc0a0a" stroke-width="1.5"/>
  <path d="M1318.9 265.4 L1372 261.5" stroke="#17981d" stroke-width="1.5"/>
  <path d="M1318.9 265.4 L1294.6 314.2" stroke="#1212e6" stroke-width="1.5"/>
  <g font-family="'Liberation Sans',sans-serif" font-size="15.5">
    <text x="1280.6" y="220.4" fill="#cc0a0a">X</text>
    <text x="1372.4" y="266.4" fill="#17981d">Y</text>
    <text x="1287.4" y="323" fill="#1212e6">Z</text>
  </g>
  <g font-family="'Liberation Sans',sans-serif" font-size="11.1" fill="#111" text-anchor="middle">
    <text transform="translate(1332.4 240.6) rotate(-120) skewX(-14)" y="3.8">Bottom</text>
    <text transform="translate(1292.6 266) rotate(-117) skewX(14)" y="3.6">Front</text>
    <text transform="translate(1334.6 287.2) rotate(172) skewX(16)" y="3.6">Left</text>
  </g>
</svg>

<!-- bottom tabs -->
<div id="tabs" class="abs"></div>
<div class="abs" style="left:0;top:931px;width:43px;height:42px;background:#174fae"></div>
<div class="abs" style="left:43px;top:931px;width:1028px;height:2.6px;background:#b4b4b4"></div>
<div class="abs" style="left:43px;top:971.6px;width:1029px;height:1.6px;background:#d9d9d9"></div>
<div class="abs" style="left:43.0px;top:933.6px;width:171.4px;height:38px;background:#ededed"></div>
<div class="abs" style="left:213.0px;top:933px;width:2.6px;height:39px;background:#d3d3d3"></div>
<div class="abs tl" style="left:82.4px;top:943.6px;font-size:13.3px;letter-spacing:0.0px">sliding ring with st...</div>
<div class="abs" style="left:214.4px;top:933.6px;width:171.4px;height:38px;background:#ededed"></div>
<div class="abs" style="left:384.4px;top:933px;width:2.6px;height:39px;background:#d3d3d3"></div>
<div class="abs tl" style="left:253.8px;top:943.6px;font-size:13.3px;letter-spacing:0.0px">sliding ring with st...</div>
<div class="abs" style="left:385.8px;top:933.6px;width:171.4px;height:38px;background:#ededed"></div>
<div class="abs" style="left:555.8px;top:933px;width:2.6px;height:39px;background:#d3d3d3"></div>
<div class="abs tl" style="left:425.2px;top:943.6px;font-size:13.3px;letter-spacing:0.0px">sliding ring with st...</div>
<div class="abs" style="left:558.4px;top:931px;width:169.4px;height:40.8px;background:#fff"></div>
<div class="abs" style="left:727.2px;top:933px;width:2.6px;height:39px;background:#d3d3d3"></div>
<div class="abs tl" style="left:596.6px;top:942.6px;font-size:15px;letter-spacing:-0.1px">asr</div>
<div class="abs" style="left:728.6px;top:933.6px;width:171.4px;height:38px;background:#ededed"></div>
<div class="abs" style="left:898.6px;top:933px;width:2.6px;height:39px;background:#d3d3d3"></div>
<div class="abs tl" style="left:768.0px;top:943.6px;font-size:13.3px;letter-spacing:-0.3px">Assembly 1</div>
<div class="abs" style="left:900.0px;top:933.6px;width:171.4px;height:38px;background:#ededed"></div>
<div class="abs" style="left:1070.0px;top:933px;width:2.6px;height:39px;background:#d3d3d3"></div>
<div class="abs tl" style="left:939.6px;top:943.6px;font-size:13.3px;letter-spacing:-0.22px">CAD Imports</div>
<div class="abs" style="left:1436px;top:937px;width:5px;height:30px;background:#707070;box-shadow:-1px 0 7px 5px rgba(100,100,100,.75),-3px 0 12px 6px rgba(120,120,120,.35)"></div><div class="abs" style="left:1439px;top:922px;width:6px;height:60px;background:linear-gradient(#fff 0,#fff 8px,#f2f2f2 9px,#f2f2f2 50px,#fff 51px)"></div>
<svg class="abs" style="left:0;top:925px" width="1445" height="60" viewBox="0 925 1445 60">
<g transform="translate(0.0 0)" fill="#f6f6f6" stroke="#222" stroke-width="1.1" stroke-linejoin="round">
  <path d="M57.6 947.4 Q57.6 945.9 59 945.9 L64.6 945.9 L68.4 948.6 L68.4 962.3 L61.4 962.3 L57.6 959.6 Z"/>
  <path d="M57.8 946.6 L61.4 949.2 L61.4 962.3 M61.4 949.2 L68.4 949.2" fill="none" stroke-width=".9"/>
  <path d="M68.1 942.8 Q68.1 941.4 69.5 941.4 L74.6 941.4 L78.4 944.2 L78.4 962.3 L71.6 962.3 L68.1 959.8 Z"/>
  <path d="M68.3 942 L71.6 944.8 L71.6 962.3 M71.6 944.8 L78.4 944.8" fill="none" stroke-width=".9"/>
</g>
<g transform="translate(171.4 0)" fill="#f6f6f6" stroke="#222" stroke-width="1.1" stroke-linejoin="round">
  <path d="M57.6 947.4 Q57.6 945.9 59 945.9 L64.6 945.9 L68.4 948.6 L68.4 962.3 L61.4 962.3 L57.6 959.6 Z"/>
  <path d="M57.8 946.6 L61.4 949.2 L61.4 962.3 M61.4 949.2 L68.4 949.2" fill="none" stroke-width=".9"/>
  <path d="M68.1 942.8 Q68.1 941.4 69.5 941.4 L74.6 941.4 L78.4 944.2 L78.4 962.3 L71.6 962.3 L68.1 959.8 Z"/>
  <path d="M68.3 942 L71.6 944.8 L71.6 962.3 M71.6 944.8 L78.4 944.8" fill="none" stroke-width=".9"/>
</g>
<g transform="translate(342.8 0)" fill="#f6f6f6" stroke="#222" stroke-width="1.1" stroke-linejoin="round">
  <path d="M57.6 947.4 Q57.6 945.9 59 945.9 L64.6 945.9 L68.4 948.6 L68.4 962.3 L61.4 962.3 L57.6 959.6 Z"/>
  <path d="M57.8 946.6 L61.4 949.2 L61.4 962.3 M61.4 949.2 L68.4 949.2" fill="none" stroke-width=".9"/>
  <path d="M68.1 942.8 Q68.1 941.4 69.5 941.4 L74.6 941.4 L78.4 944.2 L78.4 962.3 L71.6 962.3 L68.1 959.8 Z"/>
  <path d="M68.3 942 L71.6 944.8 L71.6 962.3 M71.6 944.8 L78.4 944.8" fill="none" stroke-width=".9"/>
</g>
<g transform="translate(0.0 0)" stroke-linejoin="round">
  <path d="M570.8 942.6 Q570.8 941.3 572.2 941.3 L588 941.3 L592.4 945.8 L592.4 962.4 L575.6 962.4 L570.8 957.8 Z" fill="#fff" stroke="#222" stroke-width="1.1"/>
  <path d="M571.4 942 L585.4 942 L585.4 955.8 L575.6 955.8 L571.4 951.8 Z" fill="#7c7c7c"/>
  <rect x="575.8" y="945.8" width="9.8" height="9.9" fill="#9a9a9a"/>
  <path d="M571 941.8 L575.7 945.9 L575.7 962.2 M575.7 945.9 L592.2 945.9" fill="none" stroke="#222" stroke-width=".9"/>
</g>
<g transform="translate(171.4 0)" stroke-linejoin="round">
  <path d="M570.8 942.6 Q570.8 941.3 572.2 941.3 L588 941.3 L592.4 945.8 L592.4 962.4 L575.6 962.4 L570.8 957.8 Z" fill="#fff" stroke="#222" stroke-width="1.1"/>
  <path d="M571.4 942 L585.4 942 L585.4 955.8 L575.6 955.8 L571.4 951.8 Z" fill="#7c7c7c"/>
  <rect x="575.8" y="945.8" width="9.8" height="9.9" fill="#9a9a9a"/>
  <path d="M571 941.8 L575.7 945.9 L575.7 962.2 M575.7 945.9 L592.2 945.9" fill="none" stroke="#222" stroke-width=".9"/>
</g>
<path d="M916.9 948.2 Q916.9 946.8 918.3 946.8 L922.6 946.8 L924.4 948.7 L930.6 948.7 Q932 948.7 932 950.1 L932 956.7 Q932 958.1 930.6 958.1 L918.3 958.1 Q916.9 958.1 916.9 956.7 Z" fill="#f4f4f4" stroke="#222" stroke-width="1.2" stroke-linejoin="round"/>
<g>
  <path d="M10.6 943.4 H32.6 V953.6 H31 A7.6 7.6 0 0 0 17 953.6 H10.6 Z" fill="#fff"/>
  <circle cx="24.2" cy="952.2" r="5.2" fill="#174fae" stroke="#fff" stroke-width="2.1"/>
  <path d="M27.8 956 L32 960.4" stroke="#fff" stroke-width="2.3" stroke-linecap="round"/>
</g>
</svg>

<div id="home" class="abs"></div>
</body>
</html>
